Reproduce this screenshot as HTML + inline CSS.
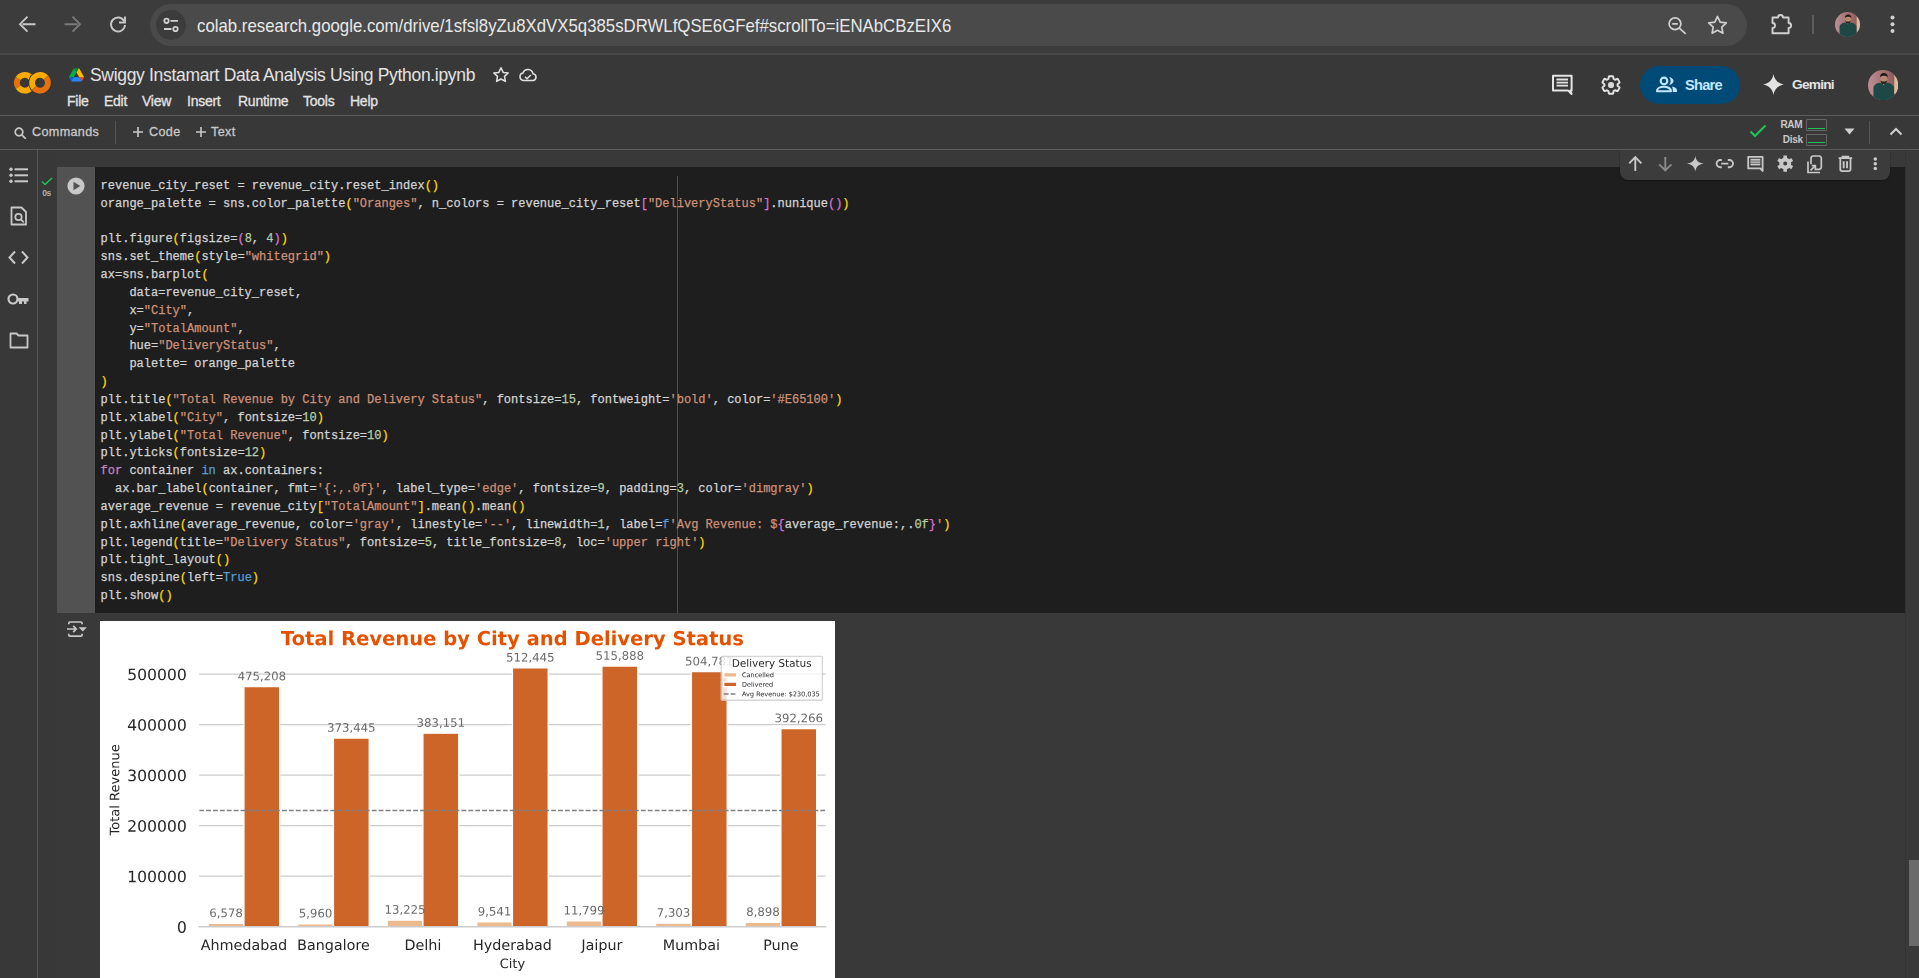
<!DOCTYPE html>
<html><head><meta charset="utf-8">
<style>
html,body{margin:0;padding:0;}
body{width:1919px;height:978px;overflow:hidden;position:relative;background:#383838;font-family:"Liberation Sans",sans-serif;color:#e3e3e3;}
.a{position:absolute;}
svg{display:block;}
/* chrome bar */
#chrome{left:0;top:0;width:1919px;height:53px;background:#3c3c3c;}
#omni{left:150px;top:4px;width:1597px;height:42px;border-radius:21px;background:#4a4a4a;}
#url{left:197px;top:15.3px;font-size:18.4px;white-space:nowrap;color:#e8e8e8;transform:scaleX(0.913);transform-origin:0 0;}
#sep1{left:0;top:53px;width:1919px;height:2px;background:#474a48;}
/* colab header */
#hdr{left:0;top:55px;width:1919px;height:60px;background:#383838;}
#title{left:90px;top:65.4px;font-size:17.5px;letter-spacing:-0.32px;color:#e3e3e3;white-space:nowrap;}
.menu{top:93.4px;font-size:14px;letter-spacing:-0.25px;-webkit-text-stroke:0.3px #e3e3e3;color:#e3e3e3;white-space:nowrap;}
#line2{left:0;top:115px;width:1919px;height:1px;background:#5c5c5c;}
#tb{left:0;top:116px;width:1919px;height:33px;background:#383838;}
.tbt{font-size:12.6px;letter-spacing:0.35px;-webkit-text-stroke:0.3px #c8c8c8;color:#c8c8c8;white-space:nowrap;top:124.6px;}
#line3{left:0;top:149px;width:1919px;height:1px;background:#5c5c5c;}
/* sidebar */
#side{left:0;top:150px;width:37px;height:828px;background:#383838;}
#sideline{left:37px;top:150px;width:1px;height:828px;background:#555555;}
#cellbg{left:57px;top:150px;width:1848px;height:828px;background:#393939;}
#gutter{left:57px;top:167px;width:38px;height:446px;background:#525252;}
#code{left:95px;top:167px;width:1810px;height:446px;background:#1e1e1e;}
#ruler{left:677px;top:176px;width:1px;height:437px;background:#505050;}
#lines{left:100.6px;top:178px;font-family:"Liberation Mono",monospace;font-size:12px;line-height:17.83px;color:#d4d4d4;white-space:pre;-webkit-text-stroke:0.25px currentColor;}
#lines i{font-style:normal;}
#lines .s{color:#ce9178;} #lines .n{color:#b5cea8;} #lines .k{color:#c586c0;} #lines .b{color:#569cd6;}
#lines .y{color:#ffd700;} #lines .p{color:#da70d6;}
#celltb{left:1620px;top:150px;width:270px;height:30px;background:#3c3c3c;border-radius:0 0 8px 8px;box-shadow:0 1px 2px rgba(0,0,0,0.35);}
#scroll{left:1905px;top:150px;width:14px;height:828px;background:#393939;border-left:1px solid #333;}
#thumb{left:1909px;top:860px;width:10px;height:86px;background:#6b6b6b;}
#chart{left:100px;top:621px;width:735px;height:357px;overflow:hidden;background:#fff;}
.mpl *{stroke-linejoin:round;stroke-linecap:butt}
</style></head><body>
<div id="chrome" class="a"></div>
<div id="omni" class="a"></div>
<!-- nav icons -->
<svg class="a" style="left:18px;top:15px" width="20" height="20" viewBox="0 0 20 20"><path d="M17.5 9.2H4.5M9.5 1.7L2 9.2l7.5 7.5" fill="none" stroke="#c7c7c7" stroke-width="1.9"/></svg>
<svg class="a" style="left:62px;top:15px" width="20" height="20" viewBox="0 0 20 20"><path d="M2.5 9.2h13M10.5 1.7L18 9.2l-7.5 7.5" fill="none" stroke="#7a7a7a" stroke-width="1.9"/></svg>
<svg class="a" style="left:107px;top:14px" width="22" height="22" viewBox="0 0 22 22"><path d="M17.2 7.2A7 7 0 1 0 18 11" fill="none" stroke="#c7c7c7" stroke-width="1.9"/><path d="M18 2.5v6h-6" fill="none" stroke="#c7c7c7" stroke-width="1.9"/></svg>
<div class="a" style="left:156px;top:10px;width:30px;height:30px;border-radius:50%;background:#3c3c3c"></div>
<svg class="a" style="left:161px;top:15px" width="20" height="20" viewBox="0 0 20 20" fill="none" stroke="#d0d0d0" stroke-width="1.8"><circle cx="5.5" cy="5.8" r="2.2"/><path d="M9.5 5.8h7.5M3 14h7.5"/><circle cx="14.5" cy="14" r="2.2"/></svg>
<div id="url" class="a">colab.research.google.com/drive/1sfsl8yZu8XdVX5q385sDRWLfQSE6GFef#scrollTo=iENAbCBzEIX6</div>
<svg class="a" style="left:1665px;top:14px" width="24" height="24" viewBox="0 0 24 24" fill="none" stroke="#d0d0d0" stroke-width="1.7"><circle cx="10" cy="9.8" r="5.9"/><path d="M7.2 9.8h5.6M14.3 14.1l6.4 5.7"/></svg>
<svg class="a" style="left:1707px;top:15px" width="21" height="21" viewBox="0 0 21 21"><path d="M10.5 1.5l2.7 5.6 6.1.8-4.5 4.2 1.1 6.1-5.4-2.9-5.4 2.9 1.1-6.1-4.5-4.2 6.1-.8z" fill="none" stroke="#d0d0d0" stroke-width="1.7" stroke-linejoin="round"/></svg>
<svg class="a" style="left:1769px;top:12px" width="25" height="24" viewBox="0 0 25 24"><path d="M3.500 5.500H9A2.500 2.500 0 0 1 14 5.500h5.600V11A2.500 2.500 0 0 1 19.600 16v5.300H3.500V16A2.500 2.500 0 0 0 3.500 11z" fill="none" stroke="#d0d0d0" stroke-width="1.9" stroke-linejoin="round"/></svg>
<div class="a" style="left:1812px;top:15px;width:2px;height:19px;background:#5c5c5c"></div>
<svg class="a" style="left:1835px;top:11.9px" width="25" height="25" viewBox="0 0 30.3 30.3"><defs><clipPath id="av1"><circle cx="15.15" cy="15.15" r="15.15"/></clipPath><linearGradient id="av1g" x1="0" y1="0" x2="1" y2="0"><stop offset="0" stop-color="#bc8e96"/><stop offset="0.55" stop-color="#a36e6e"/><stop offset="1" stop-color="#8a5654"/></linearGradient></defs><g clip-path="url(#av1)"><rect width="30.3" height="30.3" fill="url(#av1g)"/><rect x="26.3" y="5" width="5" height="19" fill="#d6bc9c"/><path d="M5.5 30.3V18c0-3 3-4.800 6.500-5.300l3.600 1.600 3.600-1.600c3.500.5 6.800 2.300 6.800 5.300v12.300z" fill="#1d4846"/><path d="M13.600 12.500l2 3 2-3z" fill="#a07a62"/><ellipse cx="15.8" cy="9.3" rx="3.600" ry="4.300" fill="#b58a70"/><path d="M12.4 10.200c.3 2.600 1.800 3.900 3.400 3.900s3.100-1.300 3.400-3.900c-.8 1-2 1.400-3.400 1.400s-2.600-.4-3.400-1.400z" fill="#2a2420"/><path d="M12 7.600c-.2-3 1.600-4.600 3.900-4.600s4.100 1.600 3.900 4.600c-.6-1.200-2-1.800-3.900-1.800s-3.300.6-3.900 1.800z" fill="#1c1816"/></g></svg>
<svg class="a" style="left:1888px;top:14px" width="9" height="22" viewBox="0 0 9 22" fill="#d0d0d0"><circle cx="4.5" cy="3.5" r="2"/><circle cx="4.5" cy="10.2" r="2"/><circle cx="4.5" cy="17.1" r="2"/></svg>
<div id="sep1" class="a"></div>
<div id="hdr" class="a"></div>
<!-- colab logo -->
<svg class="a" style="left:10px;top:64px" width="45" height="36" viewBox="10 64 45 36"><g fill="none" stroke-width="5.8"><path d="M31.03 77.89 A7.90 7.90 0 0 0 18.10 78.56" stroke="#f9ab00"/><path d="M18.10 78.56 A7.90 7.90 0 0 0 18.25 87.17" stroke="#e8710a"/><path d="M18.25 87.17 A7.90 7.90 0 0 0 31.03 87.61" stroke="#f9ab00"/><path d="M37.30 75.33 A7.90 7.90 0 0 0 37.30 90.17" stroke="#383838" stroke-width="7.4"/><path d="M45.87 77.46 A7.90 7.90 0 0 0 34.13 88.04" stroke="#f9ab00"/><path d="M34.13 88.04 A7.90 7.90 0 0 0 45.87 77.46" stroke="#e8710a"/></g></svg>
<!-- drive icon -->
<svg class="a" style="left:68.5px;top:68px" width="15" height="13.6" viewBox="0 0 87.3 78"><path d="m6.6 66.85 3.85 6.65c.8 1.4 1.950 2.5 3.3 3.3l13.75-23.8h-27.5c0 1.55.4 3.1 1.2 4.5z" fill="#0066da"/><path d="m43.65 25-13.75-23.8c-1.35.8-2.5 1.9-3.3 3.3l-25.4 44a9.06 9.06 0 0 0 -1.2 4.5h27.5z" fill="#00ac47"/><path d="m73.55 76.8c1.35-.8 2.5-1.9 3.3-3.3l1.6-2.75 7.65-13.25c.8-1.4 1.2-2.95 1.2-4.5h-27.502l5.852 11.5z" fill="#ea4335"/><path d="m43.65 25 13.75-23.8c-1.35-.8-2.9-1.2-4.5-1.2h-18.5c-1.6 0-3.15.45-4.5 1.2z" fill="#00832d"/><path d="m59.8 53h-32.3l-13.75 23.8c1.35.8 2.9 1.2 4.5 1.2h50.8c1.6 0 3.15-.45 4.5-1.2z" fill="#2684fc"/><path d="m73.4 26.5-12.7-22c-.8-1.4-1.95-2.5-3.3-3.3l-13.75 23.8 16.15 28h27.45c0-1.55-.4-3.1-1.2-4.5z" fill="#ffba00"/></svg>
<div id="title" class="a">Swiggy Instamart Data Analysis Using Python.ipynb</div>
<svg class="a" style="left:492px;top:66px" width="18" height="18" viewBox="0 0 18 18"><path d="M9 1.8l2.2 4.6 5 .6-3.7 3.4.9 5-4.4-2.4-4.4 2.4.9-5L1.8 7l5-.6z" fill="none" stroke="#e3e3e3" stroke-width="1.5" stroke-linejoin="round"/></svg>
<svg class="a" style="left:518px;top:66px" width="20" height="18" viewBox="0 0 20 18"><path d="M5.5 14.5a3.8 3.8 0 0 1-.5-7.5 5.2 5.2 0 0 1 10 .8 3.4 3.4 0 0 1 .3 6.7z" fill="none" stroke="#e3e3e3" stroke-width="1.5"/><path d="M7 10.8l2 2 3.8-3.8" fill="none" stroke="#e3e3e3" stroke-width="1.4"/></svg>
<div class="a menu" style="left:67px">File</div>
<div class="a menu" style="left:104px">Edit</div>
<div class="a menu" style="left:142px">View</div>
<div class="a menu" style="left:187px">Insert</div>
<div class="a menu" style="left:238px">Runtime</div>
<div class="a menu" style="left:303px">Tools</div>
<div class="a menu" style="left:350px">Help</div>
<!-- right header -->
<svg class="a" style="left:1551px;top:74px" width="23" height="21" viewBox="0 0 23 21"><path d="M2 1.8h18.6v14.6h-1.2l1.2 3.6-3.6-3.6H2z" fill="none" stroke="#e3e3e3" stroke-width="2" stroke-linejoin="round"/><path d="M5.5 5.5h11.5M5.5 8.6h11.5M5.5 11.6h11.5" stroke="#e3e3e3" stroke-width="1.9"/></svg>
<svg class="a" style="left:1599.5px;top:73.8px" width="22" height="22" viewBox="0 0 24 24"><path d="M19.14 12.94c.04-.3.06-.61.06-.94 0-.32-.02-.64-.07-.94l2.03-1.58a.49.49 0 0 0 .12-.61l-1.920-3.32a.49.49 0 0 0-.59-.22l-2.39.96c-.5-.38-1.03-.7-1.62-.94l-.36-2.54a.48.48 0 0 0-.48-.41h-3.84c-.24 0-.43.17-.47.41l-.36 2.540c-.59.24-1.13.57-1.62.94l-2.39-.96a.48.48 0 0 0-.59.22L2.74 8.87c-.12.21-.08.47.12.61l2.03 1.58c-.05.3-.09.63-.09.94s.02.64.07.94l-2.03 1.58a.49.49 0 0 0-.12.61l1.92 3.32c.12.22.37.29.59.22l2.39-.96c.5.38 1.03.7 1.62.94l.36 2.54c.05.24.24.41.48.41h3.84c.24 0 .44-.17.47-.41l.36-2.54c.59-.24 1.13-.56 1.62-.94l2.39.96c.22.08.47 0 .59-.22l1.92-3.32c.12-.22.07-.47-.12-.61l-2.01-1.58z" fill="none" stroke="#e3e3e3" stroke-width="2.1" stroke-linejoin="round"/><circle cx="12" cy="12" r="3.4" fill="#d8d8d8"/></svg>
<div class="a" style="left:1640px;top:66px;width:100px;height:38px;border-radius:19px;background:#004a77"></div>
<svg class="a" style="left:1655px;top:76px" width="24" height="18" viewBox="0 0 24 18"><circle cx="9" cy="4.9" r="3.3" fill="none" stroke="#c2e7ff" stroke-width="2.1"/><path d="M2 15.1c0-2.6 3.3-4.3 7-4.3s7 1.7 7 4.3v.1H2z" fill="none" stroke="#c2e7ff" stroke-width="2.1" stroke-linejoin="round"/><path d="M14 1c2.6.3 4.6 2.3 4.6 3.9S16.6 8.6 14 8.9c1-1.1 1.6-2.500 1.6-4S15 2.1 14 1z" fill="#c2e7ff"/><path d="M17 10.5c3 .6 5 2 5 4v1.6h-4.200v-1.600c0-1.600-.3-2.900-.8-4z" fill="#c2e7ff"/></svg>
<div class="a" style="left:1685px;top:76.5px;font-size:14.6px;font-weight:bold;letter-spacing:-0.75px;color:#c2e7ff">Share</div>
<svg class="a" style="left:1763px;top:74px" width="21" height="21" viewBox="0 0 21 21"><path d="M10.5 0C11.2 5.5 15 9.6 21 10.5 15 11.4 11.2 15.5 10.5 21 9.8 15.5 6 11.4 0 10.5 6 9.6 9.8 5.5 10.5 0z" fill="#e3e3e3"/></svg>
<div class="a" style="left:1792px;top:77.3px;font-size:13.7px;font-weight:bold;letter-spacing:-0.75px;color:#e3e3e3">Gemini</div>
<svg class="a" style="left:1867.9px;top:69.7px" width="30.3" height="30.3" viewBox="0 0 30.3 30.3"><defs><clipPath id="av2"><circle cx="15.15" cy="15.15" r="15.15"/></clipPath><linearGradient id="av2g" x1="0" y1="0" x2="1" y2="0"><stop offset="0" stop-color="#bc8e96"/><stop offset="0.55" stop-color="#a36e6e"/><stop offset="1" stop-color="#8a5654"/></linearGradient></defs><g clip-path="url(#av2)"><rect width="30.3" height="30.3" fill="url(#av2g)"/><rect x="26.3" y="5" width="5" height="19" fill="#d6bc9c"/><path d="M5.5 30.3V18c0-3 3-4.800 6.500-5.300l3.600 1.600 3.600-1.600c3.500.5 6.800 2.300 6.800 5.300v12.300z" fill="#1d4846"/><path d="M13.600 12.500l2 3 2-3z" fill="#a07a62"/><ellipse cx="15.8" cy="9.3" rx="3.600" ry="4.300" fill="#b58a70"/><path d="M12.4 10.200c.3 2.600 1.800 3.900 3.400 3.900s3.100-1.300 3.400-3.900c-.8 1-2 1.400-3.400 1.400s-2.600-.4-3.400-1.400z" fill="#2a2420"/><path d="M12 7.600c-.2-3 1.600-4.600 3.900-4.600s4.100 1.600 3.900 4.600c-.6-1.200-2-1.800-3.900-1.800s-3.300.6-3.900 1.800z" fill="#1c1816"/></g></svg>
<div id="line2" class="a"></div>
<div id="tb" class="a"></div>
<svg class="a" style="left:14px;top:127px" width="14" height="12" viewBox="0 0 14 12"><circle cx="5" cy="5" r="3.8" fill="none" stroke="#c8c8c8" stroke-width="1.7"/><path d="M7.8 7.8l4 4" stroke="#c8c8c8" stroke-width="1.8"/></svg>
<div class="a tbt" style="left:32px">Commands</div>
<div class="a" style="left:115px;top:121px;width:1px;height:23px;background:#555"></div>
<svg class="a" style="left:132px;top:126px" width="12" height="12" viewBox="0 0 12 12"><path d="M6 1v10M1 6h10" stroke="#c8c8c8" stroke-width="1.6"/></svg>
<div class="a tbt" style="left:149px">Code</div>
<svg class="a" style="left:195px;top:126px" width="12" height="12" viewBox="0 0 12 12"><path d="M6 1v10M1 6h10" stroke="#c8c8c8" stroke-width="1.6"/></svg>
<div class="a tbt" style="left:211px">Text</div>
<svg class="a" style="left:1749px;top:124px" width="18" height="14" viewBox="0 0 18 14"><path d="M1.5 7.5l4.5 4.5 10.5-10.5" fill="none" stroke="#1ec15a" stroke-width="2.2"/></svg>
<div class="a" style="left:1780.5px;top:119.3px;font-size:10px;font-weight:bold;letter-spacing:-0.4px;color:#c8c8c8">RAM</div>
<div class="a" style="left:1782.8px;top:134.3px;font-size:10px;font-weight:bold;letter-spacing:-0.3px;color:#c8c8c8">Disk</div>
<div class="a" style="left:1806px;top:119px;width:19px;height:10px;border:1px solid #666;border-radius:1px"><div style="position:absolute;left:1px;right:1px;bottom:1px;height:1px;background:#1ec15a"></div></div>
<div class="a" style="left:1806px;top:134px;width:19px;height:10px;border:1px solid #666;border-radius:1px"><div style="position:absolute;left:1px;right:1px;bottom:2px;height:1px;background:#1ec15a"></div></div>
<svg class="a" style="left:1844px;top:128px" width="11" height="7" viewBox="0 0 11 7"><path d="M0.5 0.5h10l-5 6z" fill="#d0d0d0"/></svg>
<div class="a" style="left:1869px;top:121px;width:1px;height:23px;background:#555"></div>
<svg class="a" style="left:1889px;top:126px" width="14" height="10" viewBox="0 0 14 10"><path d="M1.5 8.5l5.5-5.5 5.5 5.5" fill="none" stroke="#d0d0d0" stroke-width="2"/></svg>
<div id="line3" class="a"></div>
<div id="side" class="a"></div>
<div id="sideline" class="a"></div>
<!-- sidebar icons -->
<svg class="a" style="left:9px;top:167px" width="20" height="17" viewBox="0 0 20 17" fill="#c8c8c8"><circle cx="2" cy="2.3" r="1.7"/><circle cx="2" cy="8.3" r="1.7"/><circle cx="2" cy="14.3" r="1.7"/><rect x="5.5" y="1.3" width="13.5" height="2"/><rect x="5.5" y="7.3" width="13.5" height="2"/><rect x="5.5" y="13.3" width="13.5" height="2"/></svg>
<svg class="a" style="left:10px;top:206px" width="18" height="20" viewBox="0 0 18 20"><path d="M1.5 1.5h10l4.5 4.5v12.5H1.5z" fill="none" stroke="#c8c8c8" stroke-width="1.8" stroke-linejoin="round"/><circle cx="8.5" cy="11" r="3.2" fill="none" stroke="#c8c8c8" stroke-width="1.7"/><path d="M10.8 13.3l3 3" stroke="#c8c8c8" stroke-width="1.8"/></svg>
<svg class="a" style="left:8px;top:250px" width="21" height="15" viewBox="0 0 21 15"><path d="M7 1.5L1.5 7.5 7 13.5M14 1.5l5.5 6-5.5 6" fill="none" stroke="#c8c8c8" stroke-width="2"/></svg>
<svg class="a" style="left:7px;top:292px" width="23" height="14" viewBox="0 0 23 14"><circle cx="6" cy="7" r="4.5" fill="none" stroke="#c8c8c8" stroke-width="2.2"/><path d="M10.5 6h11v3.5h-2V12h-2.5V9.5h-2V12H12V9.5h-1.5" fill="#c8c8c8"/></svg>
<svg class="a" style="left:9px;top:332px" width="20" height="17" viewBox="0 0 20 17"><path d="M1.5 1.5h6l2 2h9v12h-17z" fill="none" stroke="#c8c8c8" stroke-width="1.8" stroke-linejoin="round"/></svg>
<div id="cellbg" class="a"></div>
<div class="a" style="left:38px;top:150px;width:19px;height:828px;background:#383838"></div>
<div id="gutter" class="a"></div>
<div id="code" class="a"></div>
<div id="ruler" class="a"></div>
<!-- run indicator -->
<svg class="a" style="left:41px;top:177px" width="12" height="9" viewBox="0 0 12 9"><path d="M1 4.5l3 3 7-6.5" fill="none" stroke="#1ec15a" stroke-width="1.5"/></svg>
<div class="a" style="left:42.2px;top:187.6px;font-size:8.5px;font-weight:bold;color:#b0b0b0;letter-spacing:-0.4px">0s</div>
<svg class="a" style="left:67px;top:177px" width="18" height="18" viewBox="0 0 18 18"><circle cx="9" cy="9" r="8.6" fill="#c8c8c8"/><path d="M6.5 4.8v8.4l6.8-4.2z" fill="#525252"/></svg>
<div id="lines" class="a"><div>revenue_city_reset = revenue_city.reset_index<i class="y">()</i></div><div>orange_palette = sns.color_palette<i class="y">(</i><i class="s">"Oranges"</i>, n_colors = revenue_city_reset<i class="p">[</i><i class="s">"DeliveryStatus"</i><i class="p">]</i>.nunique<i class="p">()</i><i class="y">)</i></div><div>&nbsp;</div><div>plt.figure<i class="y">(</i>figsize=<i class="p">(</i><i class="n">8</i>, <i class="n">4</i><i class="p">)</i><i class="y">)</i></div><div>sns.set_theme<i class="y">(</i>style=<i class="s">"whitegrid"</i><i class="y">)</i></div><div>ax=sns.barplot<i class="y">(</i></div><div>    data=revenue_city_reset,</div><div>    x=<i class="s">"City"</i>,</div><div>    y=<i class="s">"TotalAmount"</i>,</div><div>    hue=<i class="s">"DeliveryStatus"</i>,</div><div>    palette= orange_palette</div><div><i class="y">)</i></div><div>plt.title<i class="y">(</i><i class="s">"Total Revenue by City and Delivery Status"</i>, fontsize=<i class="n">15</i>, fontweight=<i class="s">'bold'</i>, color=<i class="s">'#E65100'</i><i class="y">)</i></div><div>plt.xlabel<i class="y">(</i><i class="s">"City"</i>, fontsize=<i class="n">10</i><i class="y">)</i></div><div>plt.ylabel<i class="y">(</i><i class="s">"Total Revenue"</i>, fontsize=<i class="n">10</i><i class="y">)</i></div><div>plt.yticks<i class="y">(</i>fontsize=<i class="n">12</i><i class="y">)</i></div><div><i class="k">for</i> container <i class="b">in</i> ax.containers:</div><div>  ax.bar_label<i class="y">(</i>container, fmt=<i class="s">'{:,.0f}'</i>, label_type=<i class="s">'edge'</i>, fontsize=<i class="n">9</i>, padding=<i class="n">3</i>, color=<i class="s">'dimgray'</i><i class="y">)</i></div><div>average_revenue = revenue_city<i class="y">[</i><i class="s">"TotalAmount"</i><i class="y">]</i>.mean<i class="y">()</i>.mean<i class="y">()</i></div><div>plt.axhline<i class="y">(</i>average_revenue, color=<i class="s">'gray'</i>, linestyle=<i class="s">'--'</i>, linewidth=<i class="n">1</i>, label=<i class="b">f</i><i class="s">'Avg Revenue: $</i><i class="p">{</i>average_revenue:,.<i class="n">0f</i><i class="p">}</i><i class="s">'</i><i class="y">)</i></div><div>plt.legend<i class="y">(</i>title=<i class="s">"Delivery Status"</i>, fontsize=<i class="n">5</i>, title_fontsize=<i class="n">8</i>, loc=<i class="s">'upper right'</i><i class="y">)</i></div><div>plt.tight_layout<i class="y">()</i></div><div>sns.despine<i class="y">(</i>left=<i class="b">True</i><i class="y">)</i></div><div>plt.show<i class="y">()</i></div></div>
<div id="celltb" class="a"></div>
<svg class="a" style="left:1620px;top:150px" width="270" height="30" viewBox="0 0 270 30" fill="none" stroke-width="1.9">
 <path d="M15.3 21V7.5M9.2 13.3l6.1-6.1 6.1 6.1" stroke="#c8c8c8" stroke-width="1.9"/>
 <path d="M45.3 7v13.4M39.2 14.3l6.1 6.1 6.1-6.1" stroke="#8a8a8a" stroke-width="1.9"/>
 <path d="M75.3 5.8C75.9 10.6 78.5 13.1 83.7 13.7 78.5 14.3 75.9 16.8 75.3 21.6 74.7 16.8 72.1 14.3 66.9 13.7 72.1 13.1 74.7 10.6 75.3 5.8z" fill="#c8c8c8" stroke="none"/>
 <path d="M101.8 10h-1.6a3.6 3.6 0 0 0 0 7.2h1.6M107.8 10h1.6a3.6 3.6 0 0 1 0 7.2h-1.6M101.2 13.6h7.2" stroke="#c8c8c8" stroke-width="1.9"/>
 <path d="M128.2 6.8h14.4v14.2l-2.3-2.6h-12.1z" stroke="#c8c8c8" stroke-width="1.8" stroke-linejoin="round"/>
 <rect x="130.5" y="8.8" width="9.8" height="6.6" fill="#c8c8c8" stroke="none"/>
 <path d="M130.5 11h9.8M130.5 13.2h9.8" stroke="#3a3a3a" stroke-width="0.7"/>
 <path fill-rule="evenodd" d="M163.41 7.87 L163.39 5.50 L167.01 5.50 L166.99 7.87 L169.26 9.18 L171.31 7.98 L173.12 11.12 L171.06 12.29 L171.06 14.91 L173.12 16.08 L171.31 19.22 L169.26 18.02 L166.99 19.33 L167.01 21.70 L163.39 21.70 L163.41 19.33 L161.14 18.02 L159.09 19.22 L157.28 16.08 L159.34 14.91 L159.34 12.29 L157.28 11.12 L159.09 7.98 L161.14 9.18z M163.20 13.60 a2.00 2.00 0 1 0 4.00 0 a2.00 2.00 0 1 0 -4.00 0z" fill="#c8c8c8" stroke="none"/>
 <path d="M194.5 19.3h4.6a2.200 2.200 0 0 0 2.2-2.200V8.2A2.200 2.200 0 0 0 199.100 6h-5.900a2.200 2.200 0 0 0-2.200 2.200v6" stroke="#c8c8c8" stroke-width="1.7"/>
 <path d="M188 11.5v11h12" stroke="#c8c8c8" stroke-width="1.7"/>
 <path d="M190.6 20.4l4.600-4.600M191.8 15.6h3.600v3.600" stroke="#c8c8c8" stroke-width="1.6"/>
 <path d="M218.6 8.2h13.6M222.5 8.2V6.6h5.8v1.6" stroke="#c8c8c8" stroke-width="1.8"/>
 <path d="M220.300 8.800v10.500a1.800 1.800 0 0 0 1.800 1.800h6.600a1.800 1.800 0 0 0 1.800-1.800V8.800" stroke="#c8c8c8" stroke-width="1.8"/>
 <path d="M223.700 11.200v7M227 11.200v7" stroke="#c8c8c8" stroke-width="1.9"/>
 <circle cx="255.3" cy="9" r="1.8" fill="#c8c8c8" stroke="none"/><circle cx="255.3" cy="13.7" r="1.8" fill="#c8c8c8" stroke="none"/><circle cx="255.3" cy="18.5" r="1.8" fill="#c8c8c8" stroke="none"/>
</svg>
<div id="scroll" class="a"></div>
<div id="thumb" class="a"></div>
<svg class="a" style="left:66px;top:620px" width="22" height="18" viewBox="0 0 22 18"><path d="M2.800 4.300V3.200c0-.7.5-1.200 1.200-1.200h10.900c.7 0 1.200.5 1.200 1.200v1.100M2.800 13.800v1.100c0 .7.5 1.200 1.200 1.200h10.900c.7 0 1.200-.5 1.200-1.200v-1.100" fill="none" stroke="#c8c8c8" stroke-width="1.700"/><path d="M1 9h9.200M7.200 5.900l3 3.100-3 3.100" fill="none" stroke="#c8c8c8" stroke-width="1.700"/><path d="M12.700 7.200h8.200l-4.100 4.300z" fill="#c8c8c8"/></svg>
<div id="chart" class="a"><svg class="mpl" width="735" height="359.2" viewBox="0 0 564.43 275.80" version="1.1"> <defs>  </defs> <g id="figure_1"> <g id="patch_1"> <path d="M 0 275.80 L 564.43 275.80 L 564.43 0 L 0 0 z " style="fill: #ffffff"/> </g> <g id="axes_1"> <g id="patch_2"> <path d="M 76.18 234.77 L 557.23 234.77 L 557.23 24.59 L 76.18 24.59 z " style="fill: #ffffff"/> </g> <g id="matplotlib.axis_1"> <g id="xtick_1"> <g id="text_1"> <g style="fill: #262626" transform="translate(77.34 252.63) scale(0.11 -0.11)"> <defs> <path id="DejaVuSans-41" d="M 2188 4044 L 1331 1722 L 3047 1722 L 2188 4044 z M 1831 4666 L 2547 4666 L 4325 0 L 3669 0 L 3244 1197 L 1141 1197 L 716 0 L 50 0 L 1831 4666 z " transform="scale(0.015625)"/> <path id="DejaVuSans-68" d="M 3513 2113 L 3513 0 L 2938 0 L 2938 2094 Q 2938 2591 2744 2837 Q 2550 3084 2163 3084 Q 1697 3084 1428 2787 Q 1159 2491 1159 1978 L 1159 0 L 581 0 L 581 4863 L 1159 4863 L 1159 2956 Q 1366 3272 1645 3428 Q 1925 3584 2291 3584 Q 2894 3584 3203 3211 Q 3513 2838 3513 2113 z " transform="scale(0.015625)"/> <path id="DejaVuSans-6d" d="M 3328 2828 Q 3544 3216 3844 3400 Q 4144 3584 4550 3584 Q 5097 3584 5394 3201 Q 5691 2819 5691 2113 L 5691 0 L 5113 0 L 5113 2094 Q 5113 2597 4934 2840 Q 4756 3084 4391 3084 Q 3944 3084 3684 2787 Q 3425 2491 3425 1978 L 3425 0 L 2847 0 L 2847 2094 Q 2847 2600 2669 2842 Q 2491 3084 2119 3084 Q 1678 3084 1418 2786 Q 1159 2488 1159 1978 L 1159 0 L 581 0 L 581 3500 L 1159 3500 L 1159 2956 Q 1356 3278 1631 3431 Q 1906 3584 2284 3584 Q 2666 3584 2933 3390 Q 3200 3197 3328 2828 z " transform="scale(0.015625)"/> <path id="DejaVuSans-65" d="M 3597 1894 L 3597 1613 L 953 1613 Q 991 1019 1311 708 Q 1631 397 2203 397 Q 2534 397 2845 478 Q 3156 559 3463 722 L 3463 178 Q 3153 47 2828 -22 Q 2503 -91 2169 -91 Q 1331 -91 842 396 Q 353 884 353 1716 Q 353 2575 817 3079 Q 1281 3584 2069 3584 Q 2775 3584 3186 3129 Q 3597 2675 3597 1894 z M 3022 2063 Q 3016 2534 2758 2815 Q 2500 3097 2075 3097 Q 1594 3097 1305 2825 Q 1016 2553 972 2059 L 3022 2063 z " transform="scale(0.015625)"/> <path id="DejaVuSans-64" d="M 2906 2969 L 2906 4863 L 3481 4863 L 3481 0 L 2906 0 L 2906 525 Q 2725 213 2448 61 Q 2172 -91 1784 -91 Q 1150 -91 751 415 Q 353 922 353 1747 Q 353 2572 751 3078 Q 1150 3584 1784 3584 Q 2172 3584 2448 3432 Q 2725 3281 2906 2969 z M 947 1747 Q 947 1113 1208 752 Q 1469 391 1925 391 Q 2381 391 2643 752 Q 2906 1113 2906 1747 Q 2906 2381 2643 2742 Q 2381 3103 1925 3103 Q 1469 3103 1208 2742 Q 947 2381 947 1747 z " transform="scale(0.015625)"/> <path id="DejaVuSans-61" d="M 2194 1759 Q 1497 1759 1228 1600 Q 959 1441 959 1056 Q 959 750 1161 570 Q 1363 391 1709 391 Q 2188 391 2477 730 Q 2766 1069 2766 1631 L 2766 1759 L 2194 1759 z M 3341 1997 L 3341 0 L 2766 0 L 2766 531 Q 2569 213 2275 61 Q 1981 -91 1556 -91 Q 1019 -91 701 211 Q 384 513 384 1019 Q 384 1609 779 1909 Q 1175 2209 1959 2209 L 2766 2209 L 2766 2266 Q 2766 2663 2505 2880 Q 2244 3097 1772 3097 Q 1472 3097 1187 3025 Q 903 2953 641 2809 L 641 3341 Q 956 3463 1253 3523 Q 1550 3584 1831 3584 Q 2591 3584 2966 3190 Q 3341 2797 3341 1997 z " transform="scale(0.015625)"/> <path id="DejaVuSans-62" d="M 3116 1747 Q 3116 2381 2855 2742 Q 2594 3103 2138 3103 Q 1681 3103 1420 2742 Q 1159 2381 1159 1747 Q 1159 1113 1420 752 Q 1681 391 2138 391 Q 2594 391 2855 752 Q 3116 1113 3116 1747 z M 1159 2969 Q 1341 3281 1617 3432 Q 1894 3584 2278 3584 Q 2916 3584 3314 3078 Q 3713 2572 3713 1747 Q 3713 922 3314 415 Q 2916 -91 2278 -91 Q 1894 -91 1617 61 Q 1341 213 1159 525 L 1159 0 L 581 0 L 581 4863 L 1159 4863 L 1159 2969 z " transform="scale(0.015625)"/> </defs> <use href="#DejaVuSans-41"/> <use href="#DejaVuSans-68" transform="translate(68.40 0)"/> <use href="#DejaVuSans-6d" transform="translate(131.78 0)"/> <use href="#DejaVuSans-65" transform="translate(229.19 0)"/> <use href="#DejaVuSans-64" transform="translate(290.72 0)"/> <use href="#DejaVuSans-61" transform="translate(354.19 0)"/> <use href="#DejaVuSans-62" transform="translate(415.47 0)"/> <use href="#DejaVuSans-61" transform="translate(478.95 0)"/> <use href="#DejaVuSans-64" transform="translate(540.23 0)"/> </g> </g> </g> <g id="xtick_2"> <g id="text_2"> <g style="fill: #262626" transform="translate(151.36 252.63) scale(0.11 -0.11)"> <defs> <path id="DejaVuSans-42" d="M 1259 2228 L 1259 519 L 2272 519 Q 2781 519 3026 730 Q 3272 941 3272 1375 Q 3272 1813 3026 2020 Q 2781 2228 2272 2228 L 1259 2228 z M 1259 4147 L 1259 2741 L 2194 2741 Q 2656 2741 2882 2914 Q 3109 3088 3109 3444 Q 3109 3797 2882 3972 Q 2656 4147 2194 4147 L 1259 4147 z M 628 4666 L 2241 4666 Q 2963 4666 3353 4366 Q 3744 4066 3744 3513 Q 3744 3084 3544 2831 Q 3344 2578 2956 2516 Q 3422 2416 3680 2098 Q 3938 1781 3938 1306 Q 3938 681 3513 340 Q 3088 0 2303 0 L 628 0 L 628 4666 z " transform="scale(0.015625)"/> <path id="DejaVuSans-6e" d="M 3513 2113 L 3513 0 L 2938 0 L 2938 2094 Q 2938 2591 2744 2837 Q 2550 3084 2163 3084 Q 1697 3084 1428 2787 Q 1159 2491 1159 1978 L 1159 0 L 581 0 L 581 3500 L 1159 3500 L 1159 2956 Q 1366 3272 1645 3428 Q 1925 3584 2291 3584 Q 2894 3584 3203 3211 Q 3513 2838 3513 2113 z " transform="scale(0.015625)"/> <path id="DejaVuSans-67" d="M 2906 1791 Q 2906 2416 2648 2759 Q 2391 3103 1925 3103 Q 1463 3103 1205 2759 Q 947 2416 947 1791 Q 947 1169 1205 825 Q 1463 481 1925 481 Q 2391 481 2648 825 Q 2906 1169 2906 1791 z M 3481 434 Q 3481 -459 3084 -895 Q 2688 -1331 1869 -1331 Q 1566 -1331 1297 -1286 Q 1028 -1241 775 -1147 L 775 -588 Q 1028 -725 1275 -790 Q 1522 -856 1778 -856 Q 2344 -856 2625 -561 Q 2906 -266 2906 331 L 2906 616 Q 2728 306 2450 153 Q 2172 0 1784 0 Q 1141 0 747 490 Q 353 981 353 1791 Q 353 2603 747 3093 Q 1141 3584 1784 3584 Q 2172 3584 2450 3431 Q 2728 3278 2906 2969 L 2906 3500 L 3481 3500 L 3481 434 z " transform="scale(0.015625)"/> <path id="DejaVuSans-6c" d="M 603 4863 L 1178 4863 L 1178 0 L 603 0 L 603 4863 z " transform="scale(0.015625)"/> <path id="DejaVuSans-6f" d="M 1959 3097 Q 1497 3097 1228 2736 Q 959 2375 959 1747 Q 959 1119 1226 758 Q 1494 397 1959 397 Q 2419 397 2687 759 Q 2956 1122 2956 1747 Q 2956 2369 2687 2733 Q 2419 3097 1959 3097 z M 1959 3584 Q 2709 3584 3137 3096 Q 3566 2609 3566 1747 Q 3566 888 3137 398 Q 2709 -91 1959 -91 Q 1206 -91 779 398 Q 353 888 353 1747 Q 353 2609 779 3096 Q 1206 3584 1959 3584 z " transform="scale(0.015625)"/> <path id="DejaVuSans-72" d="M 2631 2963 Q 2534 3019 2420 3045 Q 2306 3072 2169 3072 Q 1681 3072 1420 2755 Q 1159 2438 1159 1844 L 1159 0 L 581 0 L 581 3500 L 1159 3500 L 1159 2956 Q 1341 3275 1631 3429 Q 1922 3584 2338 3584 Q 2397 3584 2469 3576 Q 2541 3569 2628 3553 L 2631 2963 z " transform="scale(0.015625)"/> </defs> <use href="#DejaVuSans-42"/> <use href="#DejaVuSans-61" transform="translate(68.60 0)"/> <use href="#DejaVuSans-6e" transform="translate(129.88 0)"/> <use href="#DejaVuSans-67" transform="translate(193.26 0)"/> <use href="#DejaVuSans-61" transform="translate(256.73 0)"/> <use href="#DejaVuSans-6c" transform="translate(318.01 0)"/> <use href="#DejaVuSans-6f" transform="translate(345.80 0)"/> <use href="#DejaVuSans-72" transform="translate(406.98 0)"/> <use href="#DejaVuSans-65" transform="translate(445.84 0)"/> </g> </g> </g> <g id="xtick_3"> <g id="text_3"> <g style="fill: #262626" transform="translate(233.83 252.63) scale(0.11 -0.11)"> <defs> <path id="DejaVuSans-44" d="M 1259 4147 L 1259 519 L 2022 519 Q 2988 519 3436 956 Q 3884 1394 3884 2338 Q 3884 3275 3436 3711 Q 2988 4147 2022 4147 L 1259 4147 z M 628 4666 L 1925 4666 Q 3281 4666 3915 4102 Q 4550 3538 4550 2338 Q 4550 1131 3912 565 Q 3275 0 1925 0 L 628 0 L 628 4666 z " transform="scale(0.015625)"/> <path id="DejaVuSans-69" d="M 603 3500 L 1178 3500 L 1178 0 L 603 0 L 603 3500 z M 603 4863 L 1178 4863 L 1178 4134 L 603 4134 L 603 4863 z " transform="scale(0.015625)"/> </defs> <use href="#DejaVuSans-44"/> <use href="#DejaVuSans-65" transform="translate(77.00 0)"/> <use href="#DejaVuSans-6c" transform="translate(138.52 0)"/> <use href="#DejaVuSans-68" transform="translate(166.30 0)"/> <use href="#DejaVuSans-69" transform="translate(229.68 0)"/> </g> </g> </g> <g id="xtick_4"> <g id="text_4"> <g style="fill: #262626" transform="translate(286.46 252.63) scale(0.11 -0.11)"> <defs> <path id="DejaVuSans-48" d="M 628 4666 L 1259 4666 L 1259 2753 L 3553 2753 L 3553 4666 L 4184 4666 L 4184 0 L 3553 0 L 3553 2222 L 1259 2222 L 1259 0 L 628 0 L 628 4666 z " transform="scale(0.015625)"/> <path id="DejaVuSans-79" d="M 2059 -325 Q 1816 -950 1584 -1140 Q 1353 -1331 966 -1331 L 506 -1331 L 506 -850 L 844 -850 Q 1081 -850 1212 -737 Q 1344 -625 1503 -206 L 1606 56 L 191 3500 L 800 3500 L 1894 763 L 2988 3500 L 3597 3500 L 2059 -325 z " transform="scale(0.015625)"/> </defs> <use href="#DejaVuSans-48"/> <use href="#DejaVuSans-79" transform="translate(75.19 0)"/> <use href="#DejaVuSans-64" transform="translate(134.37 0)"/> <use href="#DejaVuSans-65" transform="translate(197.85 0)"/> <use href="#DejaVuSans-72" transform="translate(259.37 0)"/> <use href="#DejaVuSans-61" transform="translate(300.48 0)"/> <use href="#DejaVuSans-62" transform="translate(361.76 0)"/> <use href="#DejaVuSans-61" transform="translate(425.24 0)"/> <use href="#DejaVuSans-64" transform="translate(486.52 0)"/> </g> </g> </g> <g id="xtick_5"> <g id="text_5"> <g style="fill: #262626" transform="translate(369.67 252.63) scale(0.11 -0.11)"> <defs> <path id="DejaVuSans-4a" d="M 628 4666 L 1259 4666 L 1259 325 Q 1259 -519 939 -900 Q 619 -1281 -91 -1281 L -331 -1281 L -331 -750 L -134 -750 Q 284 -750 456 -515 Q 628 -281 628 325 L 628 4666 z " transform="scale(0.015625)"/> <path id="DejaVuSans-70" d="M 1159 525 L 1159 -1331 L 581 -1331 L 581 3500 L 1159 3500 L 1159 2969 Q 1341 3281 1617 3432 Q 1894 3584 2278 3584 Q 2916 3584 3314 3078 Q 3713 2572 3713 1747 Q 3713 922 3314 415 Q 2916 -91 2278 -91 Q 1894 -91 1617 61 Q 1341 213 1159 525 z M 3116 1747 Q 3116 2381 2855 2742 Q 2594 3103 2138 3103 Q 1681 3103 1420 2742 Q 1159 2381 1159 1747 Q 1159 1113 1420 752 Q 1681 391 2138 391 Q 2594 391 2855 752 Q 3116 1113 3116 1747 z " transform="scale(0.015625)"/> <path id="DejaVuSans-75" d="M 544 1381 L 544 3500 L 1119 3500 L 1119 1403 Q 1119 906 1312 657 Q 1506 409 1894 409 Q 2359 409 2629 706 Q 2900 1003 2900 1516 L 2900 3500 L 3475 3500 L 3475 0 L 2900 0 L 2900 538 Q 2691 219 2414 64 Q 2138 -91 1772 -91 Q 1169 -91 856 284 Q 544 659 544 1381 z M 1991 3584 L 1991 3584 z " transform="scale(0.015625)"/> </defs> <use href="#DejaVuSans-4a"/> <use href="#DejaVuSans-61" transform="translate(29.49 0)"/> <use href="#DejaVuSans-69" transform="translate(90.77 0)"/> <use href="#DejaVuSans-70" transform="translate(118.55 0)"/> <use href="#DejaVuSans-75" transform="translate(182.03 0)"/> <use href="#DejaVuSans-72" transform="translate(245.41 0)"/> </g> </g> </g> <g id="xtick_6"> <g id="text_6"> <g style="fill: #262626" transform="translate(432.17 252.63) scale(0.11 -0.11)"> <defs> <path id="DejaVuSans-4d" d="M 628 4666 L 1569 4666 L 2759 1491 L 3956 4666 L 4897 4666 L 4897 0 L 4281 0 L 4281 4097 L 3078 897 L 2444 897 L 1241 4097 L 1241 0 L 628 0 L 628 4666 z " transform="scale(0.015625)"/> </defs> <use href="#DejaVuSans-4d"/> <use href="#DejaVuSans-75" transform="translate(86.27 0)"/> <use href="#DejaVuSans-6d" transform="translate(149.65 0)"/> <use href="#DejaVuSans-62" transform="translate(247.07 0)"/> <use href="#DejaVuSans-61" transform="translate(310.54 0)"/> <use href="#DejaVuSans-69" transform="translate(371.82 0)"/> </g> </g> </g> <g id="xtick_7"> <g id="text_7"> <g style="fill: #262626" transform="translate(509.30 252.63) scale(0.11 -0.11)"> <defs> <path id="DejaVuSans-50" d="M 1259 4147 L 1259 2394 L 2053 2394 Q 2494 2394 2734 2622 Q 2975 2850 2975 3272 Q 2975 3691 2734 3919 Q 2494 4147 2053 4147 L 1259 4147 z M 628 4666 L 2053 4666 Q 2838 4666 3239 4311 Q 3641 3956 3641 3272 Q 3641 2581 3239 2228 Q 2838 1875 2053 1875 L 1259 1875 L 1259 0 L 628 0 L 628 4666 z " transform="scale(0.015625)"/> </defs> <use href="#DejaVuSans-50"/> <use href="#DejaVuSans-75" transform="translate(58.55 0)"/> <use href="#DejaVuSans-6e" transform="translate(121.93 0)"/> <use href="#DejaVuSans-65" transform="translate(185.31 0)"/> </g> </g> </g> <g id="text_8"> <g style="fill: #262626" transform="translate(306.91 266.52) scale(0.1 -0.1)"> <defs> <path id="DejaVuSans-43" d="M 4122 4306 L 4122 3641 Q 3803 3938 3442 4084 Q 3081 4231 2675 4231 Q 1875 4231 1450 3742 Q 1025 3253 1025 2328 Q 1025 1406 1450 917 Q 1875 428 2675 428 Q 3081 428 3442 575 Q 3803 722 4122 1019 L 4122 359 Q 3791 134 3420 21 Q 3050 -91 2638 -91 Q 1578 -91 968 557 Q 359 1206 359 2328 Q 359 3453 968 4101 Q 1578 4750 2638 4750 Q 3056 4750 3426 4639 Q 3797 4528 4122 4306 z " transform="scale(0.015625)"/> <path id="DejaVuSans-74" d="M 1172 4494 L 1172 3500 L 2356 3500 L 2356 3053 L 1172 3053 L 1172 1153 Q 1172 725 1289 603 Q 1406 481 1766 481 L 2356 481 L 2356 0 L 1766 0 Q 1100 0 847 248 Q 594 497 594 1153 L 594 3053 L 172 3053 L 172 3500 L 594 3500 L 594 4494 L 1172 4494 z " transform="scale(0.015625)"/> </defs> <use href="#DejaVuSans-43"/> <use href="#DejaVuSans-69" transform="translate(69.82 0)"/> <use href="#DejaVuSans-74" transform="translate(97.60 0)"/> <use href="#DejaVuSans-79" transform="translate(136.81 0)"/> </g> </g> </g> <g id="matplotlib.axis_2"> <g id="ytick_1"> <g id="line2d_1"> <path d="M 76.18 234.77 L 557.23 234.77 " clip-path="url(#p7ad8301192)" style="fill: none; stroke: #cccccc; stroke-linecap: round"/> </g> <g id="text_9"> <g style="fill: #262626" transform="translate(59.05 239.33) scale(0.12 -0.12)"> <defs> <path id="DejaVuSans-30" d="M 2034 4250 Q 1547 4250 1301 3770 Q 1056 3291 1056 2328 Q 1056 1369 1301 889 Q 1547 409 2034 409 Q 2525 409 2770 889 Q 3016 1369 3016 2328 Q 3016 3291 2770 3770 Q 2525 4250 2034 4250 z M 2034 4750 Q 2819 4750 3233 4129 Q 3647 3509 3647 2328 Q 3647 1150 3233 529 Q 2819 -91 2034 -91 Q 1250 -91 836 529 Q 422 1150 422 2328 Q 422 3509 836 4129 Q 1250 4750 2034 4750 z " transform="scale(0.015625)"/> </defs> <use href="#DejaVuSans-30"/> </g> </g> </g> <g id="ytick_2"> <g id="line2d_2"> <path d="M 76.18 195.97 L 557.23 195.97 " clip-path="url(#p7ad8301192)" style="fill: none; stroke: #cccccc; stroke-linecap: round"/> </g> <g id="text_10"> <g style="fill: #262626" transform="translate(20.87 200.53) scale(0.12 -0.12)"> <defs> <path id="DejaVuSans-31" d="M 794 531 L 1825 531 L 1825 4091 L 703 3866 L 703 4441 L 1819 4666 L 2450 4666 L 2450 531 L 3481 531 L 3481 0 L 794 0 L 794 531 z " transform="scale(0.015625)"/> </defs> <use href="#DejaVuSans-31"/> <use href="#DejaVuSans-30" transform="translate(63.62 0)"/> <use href="#DejaVuSans-30" transform="translate(127.24 0)"/> <use href="#DejaVuSans-30" transform="translate(190.86 0)"/> <use href="#DejaVuSans-30" transform="translate(254.49 0)"/> <use href="#DejaVuSans-30" transform="translate(318.11 0)"/> </g> </g> </g> <g id="ytick_3"> <g id="line2d_3"> <path d="M 76.18 157.17 L 557.23 157.17 " clip-path="url(#p7ad8301192)" style="fill: none; stroke: #cccccc; stroke-linecap: round"/> </g> <g id="text_11"> <g style="fill: #262626" transform="translate(20.87 161.73) scale(0.12 -0.12)"> <defs> <path id="DejaVuSans-32" d="M 1228 531 L 3431 531 L 3431 0 L 469 0 L 469 531 Q 828 903 1448 1529 Q 2069 2156 2228 2338 Q 2531 2678 2651 2914 Q 2772 3150 2772 3378 Q 2772 3750 2511 3984 Q 2250 4219 1831 4219 Q 1534 4219 1204 4116 Q 875 4013 500 3803 L 500 4441 Q 881 4594 1212 4672 Q 1544 4750 1819 4750 Q 2544 4750 2975 4387 Q 3406 4025 3406 3419 Q 3406 3131 3298 2873 Q 3191 2616 2906 2266 Q 2828 2175 2409 1742 Q 1991 1309 1228 531 z " transform="scale(0.015625)"/> </defs> <use href="#DejaVuSans-32"/> <use href="#DejaVuSans-30" transform="translate(63.62 0)"/> <use href="#DejaVuSans-30" transform="translate(127.24 0)"/> <use href="#DejaVuSans-30" transform="translate(190.86 0)"/> <use href="#DejaVuSans-30" transform="translate(254.49 0)"/> <use href="#DejaVuSans-30" transform="translate(318.11 0)"/> </g> </g> </g> <g id="ytick_4"> <g id="line2d_4"> <path d="M 76.18 118.37 L 557.23 118.37 " clip-path="url(#p7ad8301192)" style="fill: none; stroke: #cccccc; stroke-linecap: round"/> </g> <g id="text_12"> <g style="fill: #262626" transform="translate(20.87 122.93) scale(0.12 -0.12)"> <defs> <path id="DejaVuSans-33" d="M 2597 2516 Q 3050 2419 3304 2112 Q 3559 1806 3559 1356 Q 3559 666 3084 287 Q 2609 -91 1734 -91 Q 1441 -91 1130 -33 Q 819 25 488 141 L 488 750 Q 750 597 1062 519 Q 1375 441 1716 441 Q 2309 441 2620 675 Q 2931 909 2931 1356 Q 2931 1769 2642 2001 Q 2353 2234 1838 2234 L 1294 2234 L 1294 2753 L 1863 2753 Q 2328 2753 2575 2939 Q 2822 3125 2822 3475 Q 2822 3834 2567 4026 Q 2313 4219 1838 4219 Q 1578 4219 1281 4162 Q 984 4106 628 3988 L 628 4550 Q 988 4650 1302 4700 Q 1616 4750 1894 4750 Q 2613 4750 3031 4423 Q 3450 4097 3450 3541 Q 3450 3153 3228 2886 Q 3006 2619 2597 2516 z " transform="scale(0.015625)"/> </defs> <use href="#DejaVuSans-33"/> <use href="#DejaVuSans-30" transform="translate(63.62 0)"/> <use href="#DejaVuSans-30" transform="translate(127.24 0)"/> <use href="#DejaVuSans-30" transform="translate(190.86 0)"/> <use href="#DejaVuSans-30" transform="translate(254.49 0)"/> <use href="#DejaVuSans-30" transform="translate(318.11 0)"/> </g> </g> </g> <g id="ytick_5"> <g id="line2d_5"> <path d="M 76.18 79.57 L 557.23 79.57 " clip-path="url(#p7ad8301192)" style="fill: none; stroke: #cccccc; stroke-linecap: round"/> </g> <g id="text_13"> <g style="fill: #262626" transform="translate(20.87 84.13) scale(0.12 -0.12)"> <defs> <path id="DejaVuSans-34" d="M 2419 4116 L 825 1625 L 2419 1625 L 2419 4116 z M 2253 4666 L 3047 4666 L 3047 1625 L 3713 1625 L 3713 1100 L 3047 1100 L 3047 0 L 2419 0 L 2419 1100 L 313 1100 L 313 1709 L 2253 4666 z " transform="scale(0.015625)"/> </defs> <use href="#DejaVuSans-34"/> <use href="#DejaVuSans-30" transform="translate(63.62 0)"/> <use href="#DejaVuSans-30" transform="translate(127.24 0)"/> <use href="#DejaVuSans-30" transform="translate(190.86 0)"/> <use href="#DejaVuSans-30" transform="translate(254.49 0)"/> <use href="#DejaVuSans-30" transform="translate(318.11 0)"/> </g> </g> </g> <g id="ytick_6"> <g id="line2d_6"> <path d="M 76.18 40.77 L 557.23 40.77 " clip-path="url(#p7ad8301192)" style="fill: none; stroke: #cccccc; stroke-linecap: round"/> </g> <g id="text_14"> <g style="fill: #262626" transform="translate(20.87 45.33) scale(0.12 -0.12)"> <defs> <path id="DejaVuSans-35" d="M 691 4666 L 3169 4666 L 3169 4134 L 1269 4134 L 1269 2991 Q 1406 3038 1543 3061 Q 1681 3084 1819 3084 Q 2600 3084 3056 2656 Q 3513 2228 3513 1497 Q 3513 744 3044 326 Q 2575 -91 1722 -91 Q 1428 -91 1123 -41 Q 819 9 494 109 L 494 744 Q 775 591 1075 516 Q 1375 441 1709 441 Q 2250 441 2565 725 Q 2881 1009 2881 1497 Q 2881 1984 2565 2268 Q 2250 2553 1709 2553 Q 1456 2553 1204 2497 Q 953 2441 691 2322 L 691 4666 z " transform="scale(0.015625)"/> </defs> <use href="#DejaVuSans-35"/> <use href="#DejaVuSans-30" transform="translate(63.62 0)"/> <use href="#DejaVuSans-30" transform="translate(127.24 0)"/> <use href="#DejaVuSans-30" transform="translate(190.86 0)"/> <use href="#DejaVuSans-30" transform="translate(254.49 0)"/> <use href="#DejaVuSans-30" transform="translate(318.11 0)"/> </g> </g> </g> <g id="text_15"> <g style="fill: #262626" transform="translate(14.79 164.72) rotate(-90) scale(0.1 -0.1)"> <defs> <path id="DejaVuSans-54" d="M -19 4666 L 3928 4666 L 3928 4134 L 2272 4134 L 2272 0 L 1638 0 L 1638 4134 L -19 4134 L -19 4666 z " transform="scale(0.015625)"/> <path id="DejaVuSans-20" transform="scale(0.015625)"/> <path id="DejaVuSans-52" d="M 2841 2188 Q 3044 2119 3236 1894 Q 3428 1669 3622 1275 L 4263 0 L 3584 0 L 2988 1197 Q 2756 1666 2539 1819 Q 2322 1972 1947 1972 L 1259 1972 L 1259 0 L 628 0 L 628 4666 L 2053 4666 Q 2853 4666 3247 4331 Q 3641 3997 3641 3322 Q 3641 2881 3436 2590 Q 3231 2300 2841 2188 z M 1259 4147 L 1259 2491 L 2053 2491 Q 2509 2491 2742 2702 Q 2975 2913 2975 3322 Q 2975 3731 2742 3939 Q 2509 4147 2053 4147 L 1259 4147 z " transform="scale(0.015625)"/> <path id="DejaVuSans-76" d="M 191 3500 L 800 3500 L 1894 563 L 2988 3500 L 3597 3500 L 2284 0 L 1503 0 L 191 3500 z " transform="scale(0.015625)"/> </defs> <use href="#DejaVuSans-54"/> <use href="#DejaVuSans-6f" transform="translate(44.08 0)"/> <use href="#DejaVuSans-74" transform="translate(105.26 0)"/> <use href="#DejaVuSans-61" transform="translate(144.47 0)"/> <use href="#DejaVuSans-6c" transform="translate(205.75 0)"/> <use href="#DejaVuSans-20" transform="translate(233.53 0)"/> <use href="#DejaVuSans-52" transform="translate(265.32 0)"/> <use href="#DejaVuSans-65" transform="translate(330.30 0)"/> <use href="#DejaVuSans-76" transform="translate(391.83 0)"/> <use href="#DejaVuSans-65" transform="translate(451.00 0)"/> <use href="#DejaVuSans-6e" transform="translate(512.53 0)"/> <use href="#DejaVuSans-75" transform="translate(575.91 0)"/> <use href="#DejaVuSans-65" transform="translate(639.29 0)"/> </g> </g> </g> <g id="patch_3"> <path d="M 83.06 234.77 L 110.54 234.77 L 110.54 232.22 L 83.06 232.22 z " clip-path="url(#p7ad8301192)" style="fill: #edba8d; stroke: #ffffff; stroke-linejoin: miter"/> </g> <g id="patch_4"> <path d="M 151.78 234.77 L 179.27 234.77 L 179.27 232.46 L 151.78 232.46 z " clip-path="url(#p7ad8301192)" style="fill: #edba8d; stroke: #ffffff; stroke-linejoin: miter"/> </g> <g id="patch_5"> <path d="M 220.50 234.77 L 247.99 234.77 L 247.99 229.64 L 220.50 229.64 z " clip-path="url(#p7ad8301192)" style="fill: #edba8d; stroke: #ffffff; stroke-linejoin: miter"/> </g> <g id="patch_6"> <path d="M 289.22 234.77 L 316.71 234.77 L 316.71 231.07 L 289.22 231.07 z " clip-path="url(#p7ad8301192)" style="fill: #edba8d; stroke: #ffffff; stroke-linejoin: miter"/> </g> <g id="patch_7"> <path d="M 357.94 234.77 L 385.43 234.77 L 385.43 230.19 L 357.94 230.19 z " clip-path="url(#p7ad8301192)" style="fill: #edba8d; stroke: #ffffff; stroke-linejoin: miter"/> </g> <g id="patch_8"> <path d="M 426.66 234.77 L 454.15 234.77 L 454.15 231.94 L 426.66 231.94 z " clip-path="url(#p7ad8301192)" style="fill: #edba8d; stroke: #ffffff; stroke-linejoin: miter"/> </g> <g id="patch_9"> <path d="M 495.38 234.77 L 522.87 234.77 L 522.87 231.32 L 495.38 231.32 z " clip-path="url(#p7ad8301192)" style="fill: #edba8d; stroke: #ffffff; stroke-linejoin: miter"/> </g> <g id="patch_10"> <path d="M 110.54 234.77 L 138.03 234.77 L 138.03 50.39 L 110.54 50.39 z " clip-path="url(#p7ad8301192)" style="fill: #ce6528; stroke: #ffffff; stroke-linejoin: miter"/> </g> <g id="patch_11"> <path d="M 179.27 234.77 L 206.75 234.77 L 206.75 89.87 L 179.27 89.87 z " clip-path="url(#p7ad8301192)" style="fill: #ce6528; stroke: #ffffff; stroke-linejoin: miter"/> </g> <g id="patch_12"> <path d="M 247.99 234.77 L 275.48 234.77 L 275.48 86.10 L 247.99 86.10 z " clip-path="url(#p7ad8301192)" style="fill: #ce6528; stroke: #ffffff; stroke-linejoin: miter"/> </g> <g id="patch_13"> <path d="M 316.71 234.77 L 344.20 234.77 L 344.20 35.94 L 316.71 35.94 z " clip-path="url(#p7ad8301192)" style="fill: #ce6528; stroke: #ffffff; stroke-linejoin: miter"/> </g> <g id="patch_14"> <path d="M 385.43 234.77 L 412.92 234.77 L 412.92 34.60 L 385.43 34.60 z " clip-path="url(#p7ad8301192)" style="fill: #ce6528; stroke: #ffffff; stroke-linejoin: miter"/> </g> <g id="patch_15"> <path d="M 454.15 234.77 L 481.64 234.77 L 481.64 38.91 L 454.15 38.91 z " clip-path="url(#p7ad8301192)" style="fill: #ce6528; stroke: #ffffff; stroke-linejoin: miter"/> </g> <g id="patch_16"> <path d="M 522.87 234.77 L 550.36 234.77 L 550.36 82.57 L 522.87 82.57 z " clip-path="url(#p7ad8301192)" style="fill: #ce6528; stroke: #ffffff; stroke-linejoin: miter"/> </g> <g id="patch_17"> <path d="M 110.54 234.77 L 110.54 234.77 L 110.54 234.77 L 110.54 234.77 z " clip-path="url(#p7ad8301192)" style="fill: #edba8d; stroke: #ffffff; stroke-linejoin: miter"/> </g> <g id="patch_18"> <path d="M 110.54 234.77 L 110.54 234.77 L 110.54 234.77 L 110.54 234.77 z " clip-path="url(#p7ad8301192)" style="fill: #ce6528; stroke: #ffffff; stroke-linejoin: miter"/> </g> <g id="line2d_7"> <path clip-path="url(#p7ad8301192)" style="fill: none; stroke: #424242; stroke-width: 2.25; stroke-linecap: round"/> </g> <g id="line2d_8"> <path clip-path="url(#p7ad8301192)" style="fill: none; stroke: #424242; stroke-width: 2.25; stroke-linecap: round"/> </g> <g id="line2d_9"> <path clip-path="url(#p7ad8301192)" style="fill: none; stroke: #424242; stroke-width: 2.25; stroke-linecap: round"/> </g> <g id="line2d_10"> <path clip-path="url(#p7ad8301192)" style="fill: none; stroke: #424242; stroke-width: 2.25; stroke-linecap: round"/> </g> <g id="line2d_11"> <path clip-path="url(#p7ad8301192)" style="fill: none; stroke: #424242; stroke-width: 2.25; stroke-linecap: round"/> </g> <g id="line2d_12"> <path clip-path="url(#p7ad8301192)" style="fill: none; stroke: #424242; stroke-width: 2.25; stroke-linecap: round"/> </g> <g id="line2d_13"> <path clip-path="url(#p7ad8301192)" style="fill: none; stroke: #424242; stroke-width: 2.25; stroke-linecap: round"/> </g> <g id="line2d_14"> <path clip-path="url(#p7ad8301192)" style="fill: none; stroke: #424242; stroke-width: 2.25; stroke-linecap: round"/> </g> <g id="line2d_15"> <path clip-path="url(#p7ad8301192)" style="fill: none; stroke: #424242; stroke-width: 2.25; stroke-linecap: round"/> </g> <g id="line2d_16"> <path clip-path="url(#p7ad8301192)" style="fill: none; stroke: #424242; stroke-width: 2.25; stroke-linecap: round"/> </g> <g id="line2d_17"> <path clip-path="url(#p7ad8301192)" style="fill: none; stroke: #424242; stroke-width: 2.25; stroke-linecap: round"/> </g> <g id="line2d_18"> <path clip-path="url(#p7ad8301192)" style="fill: none; stroke: #424242; stroke-width: 2.25; stroke-linecap: round"/> </g> <g id="line2d_19"> <path clip-path="url(#p7ad8301192)" style="fill: none; stroke: #424242; stroke-width: 2.25; stroke-linecap: round"/> </g> <g id="line2d_20"> <path clip-path="url(#p7ad8301192)" style="fill: none; stroke: #424242; stroke-width: 2.25; stroke-linecap: round"/> </g> <g id="line2d_21"> <path d="M 76.18 145.52 L 557.23 145.52 " clip-path="url(#p7ad8301192)" style="fill: none; stroke-dasharray: 3.7,1.6; stroke-dashoffset: 0; stroke: #808080"/> </g> <g id="patch_19"> <path d="M 76.18 234.77 L 557.23 234.77 " style="fill: none; stroke: #cccccc; stroke-width: 1.25; stroke-linejoin: miter; stroke-linecap: square"/> </g> <g id="text_16"> <g style="fill: #696969" transform="translate(83.92 227.35) scale(0.09 -0.09)"> <defs> <path id="DejaVuSans-36" d="M 2113 2584 Q 1688 2584 1439 2293 Q 1191 2003 1191 1497 Q 1191 994 1439 701 Q 1688 409 2113 409 Q 2538 409 2786 701 Q 3034 994 3034 1497 Q 3034 2003 2786 2293 Q 2538 2584 2113 2584 z M 3366 4563 L 3366 3988 Q 3128 4100 2886 4159 Q 2644 4219 2406 4219 Q 1781 4219 1451 3797 Q 1122 3375 1075 2522 Q 1259 2794 1537 2939 Q 1816 3084 2150 3084 Q 2853 3084 3261 2657 Q 3669 2231 3669 1497 Q 3669 778 3244 343 Q 2819 -91 2113 -91 Q 1303 -91 875 529 Q 447 1150 447 2328 Q 447 3434 972 4092 Q 1497 4750 2381 4750 Q 2619 4750 2861 4703 Q 3103 4656 3366 4563 z " transform="scale(0.015625)"/> <path id="DejaVuSans-2c" d="M 750 794 L 1409 794 L 1409 256 L 897 -744 L 494 -744 L 750 256 L 750 794 z " transform="scale(0.015625)"/> <path id="DejaVuSans-37" d="M 525 4666 L 3525 4666 L 3525 4397 L 1831 0 L 1172 0 L 2766 4134 L 525 4134 L 525 4666 z " transform="scale(0.015625)"/> <path id="DejaVuSans-38" d="M 2034 2216 Q 1584 2216 1326 1975 Q 1069 1734 1069 1313 Q 1069 891 1326 650 Q 1584 409 2034 409 Q 2484 409 2743 651 Q 3003 894 3003 1313 Q 3003 1734 2745 1975 Q 2488 2216 2034 2216 z M 1403 2484 Q 997 2584 770 2862 Q 544 3141 544 3541 Q 544 4100 942 4425 Q 1341 4750 2034 4750 Q 2731 4750 3128 4425 Q 3525 4100 3525 3541 Q 3525 3141 3298 2862 Q 3072 2584 2669 2484 Q 3125 2378 3379 2068 Q 3634 1759 3634 1313 Q 3634 634 3220 271 Q 2806 -91 2034 -91 Q 1263 -91 848 271 Q 434 634 434 1313 Q 434 1759 690 2068 Q 947 2378 1403 2484 z M 1172 3481 Q 1172 3119 1398 2916 Q 1625 2713 2034 2713 Q 2441 2713 2670 2916 Q 2900 3119 2900 3481 Q 2900 3844 2670 4047 Q 2441 4250 2034 4250 Q 1625 4250 1398 4047 Q 1172 3844 1172 3481 z " transform="scale(0.015625)"/> </defs> <use href="#DejaVuSans-36"/> <use href="#DejaVuSans-2c" transform="translate(63.62 0)"/> <use href="#DejaVuSans-35" transform="translate(95.41 0)"/> <use href="#DejaVuSans-37" transform="translate(159.03 0)"/> <use href="#DejaVuSans-38" transform="translate(222.65 0)"/> </g> </g> <g id="text_17"> <g style="fill: #696969" transform="translate(152.64 227.59) scale(0.09 -0.09)"> <defs> <path id="DejaVuSans-39" d="M 703 97 L 703 672 Q 941 559 1184 500 Q 1428 441 1663 441 Q 2288 441 2617 861 Q 2947 1281 2994 2138 Q 2813 1869 2534 1725 Q 2256 1581 1919 1581 Q 1219 1581 811 2004 Q 403 2428 403 3163 Q 403 3881 828 4315 Q 1253 4750 1959 4750 Q 2769 4750 3195 4129 Q 3622 3509 3622 2328 Q 3622 1225 3098 567 Q 2575 -91 1691 -91 Q 1453 -91 1209 -44 Q 966 3 703 97 z M 1959 2075 Q 2384 2075 2632 2365 Q 2881 2656 2881 3163 Q 2881 3666 2632 3958 Q 2384 4250 1959 4250 Q 1534 4250 1286 3958 Q 1038 3666 1038 3163 Q 1038 2656 1286 2365 Q 1534 2075 1959 2075 z " transform="scale(0.015625)"/> </defs> <use href="#DejaVuSans-35"/> <use href="#DejaVuSans-2c" transform="translate(63.62 0)"/> <use href="#DejaVuSans-39" transform="translate(95.41 0)"/> <use href="#DejaVuSans-36" transform="translate(159.03 0)"/> <use href="#DejaVuSans-30" transform="translate(222.65 0)"/> </g> </g> <g id="text_18"> <g style="fill: #696969" transform="translate(218.50 224.77) scale(0.09 -0.09)"> <use href="#DejaVuSans-31"/> <use href="#DejaVuSans-33" transform="translate(63.62 0)"/> <use href="#DejaVuSans-2c" transform="translate(127.24 0)"/> <use href="#DejaVuSans-32" transform="translate(159.03 0)"/> <use href="#DejaVuSans-32" transform="translate(222.65 0)"/> <use href="#DejaVuSans-35" transform="translate(286.27 0)"/> </g> </g> <g id="text_19"> <g style="fill: #696969" transform="translate(290.08 226.20) scale(0.09 -0.09)"> <use href="#DejaVuSans-39"/> <use href="#DejaVuSans-2c" transform="translate(63.62 0)"/> <use href="#DejaVuSans-35" transform="translate(95.41 0)"/> <use href="#DejaVuSans-34" transform="translate(159.03 0)"/> <use href="#DejaVuSans-31" transform="translate(222.65 0)"/> </g> </g> <g id="text_20"> <g style="fill: #696969" transform="translate(355.94 225.32) scale(0.09 -0.09)"> <use href="#DejaVuSans-31"/> <use href="#DejaVuSans-31" transform="translate(63.62 0)"/> <use href="#DejaVuSans-2c" transform="translate(127.24 0)"/> <use href="#DejaVuSans-37" transform="translate(159.03 0)"/> <use href="#DejaVuSans-39" transform="translate(222.65 0)"/> <use href="#DejaVuSans-39" transform="translate(286.27 0)"/> </g> </g> <g id="text_21"> <g style="fill: #696969" transform="translate(427.52 227.07) scale(0.09 -0.09)"> <use href="#DejaVuSans-37"/> <use href="#DejaVuSans-2c" transform="translate(63.62 0)"/> <use href="#DejaVuSans-33" transform="translate(95.41 0)"/> <use href="#DejaVuSans-30" transform="translate(159.03 0)"/> <use href="#DejaVuSans-33" transform="translate(222.65 0)"/> </g> </g> <g id="text_22"> <g style="fill: #696969" transform="translate(496.25 226.45) scale(0.09 -0.09)"> <use href="#DejaVuSans-38"/> <use href="#DejaVuSans-2c" transform="translate(63.62 0)"/> <use href="#DejaVuSans-38" transform="translate(95.41 0)"/> <use href="#DejaVuSans-39" transform="translate(159.03 0)"/> <use href="#DejaVuSans-38" transform="translate(222.65 0)"/> </g> </g> <g id="text_23"> <g style="fill: #696969" transform="translate(105.68 45.51) scale(0.09 -0.09)"> <use href="#DejaVuSans-34"/> <use href="#DejaVuSans-37" transform="translate(63.62 0)"/> <use href="#DejaVuSans-35" transform="translate(127.24 0)"/> <use href="#DejaVuSans-2c" transform="translate(190.86 0)"/> <use href="#DejaVuSans-32" transform="translate(222.65 0)"/> <use href="#DejaVuSans-30" transform="translate(286.27 0)"/> <use href="#DejaVuSans-38" transform="translate(349.90 0)"/> </g> </g> <g id="text_24"> <g style="fill: #696969" transform="translate(174.40 85.00) scale(0.09 -0.09)"> <use href="#DejaVuSans-33"/> <use href="#DejaVuSans-37" transform="translate(63.62 0)"/> <use href="#DejaVuSans-33" transform="translate(127.24 0)"/> <use href="#DejaVuSans-2c" transform="translate(190.86 0)"/> <use href="#DejaVuSans-34" transform="translate(222.65 0)"/> <use href="#DejaVuSans-34" transform="translate(286.27 0)"/> <use href="#DejaVuSans-35" transform="translate(349.90 0)"/> </g> </g> <g id="text_25"> <g style="fill: #696969" transform="translate(243.12 81.23) scale(0.09 -0.09)"> <use href="#DejaVuSans-33"/> <use href="#DejaVuSans-38" transform="translate(63.62 0)"/> <use href="#DejaVuSans-33" transform="translate(127.24 0)"/> <use href="#DejaVuSans-2c" transform="translate(190.86 0)"/> <use href="#DejaVuSans-31" transform="translate(222.65 0)"/> <use href="#DejaVuSans-35" transform="translate(286.27 0)"/> <use href="#DejaVuSans-31" transform="translate(349.90 0)"/> </g> </g> <g id="text_26"> <g style="fill: #696969" transform="translate(311.84 31.07) scale(0.09 -0.09)"> <use href="#DejaVuSans-35"/> <use href="#DejaVuSans-31" transform="translate(63.62 0)"/> <use href="#DejaVuSans-32" transform="translate(127.24 0)"/> <use href="#DejaVuSans-2c" transform="translate(190.86 0)"/> <use href="#DejaVuSans-34" transform="translate(222.65 0)"/> <use href="#DejaVuSans-34" transform="translate(286.27 0)"/> <use href="#DejaVuSans-35" transform="translate(349.90 0)"/> </g> </g> <g id="text_27"> <g style="fill: #696969" transform="translate(380.56 29.73) scale(0.09 -0.09)"> <use href="#DejaVuSans-35"/> <use href="#DejaVuSans-31" transform="translate(63.62 0)"/> <use href="#DejaVuSans-35" transform="translate(127.24 0)"/> <use href="#DejaVuSans-2c" transform="translate(190.86 0)"/> <use href="#DejaVuSans-38" transform="translate(222.65 0)"/> <use href="#DejaVuSans-38" transform="translate(286.27 0)"/> <use href="#DejaVuSans-38" transform="translate(349.90 0)"/> </g> </g> <g id="text_28"> <g style="fill: #696969" transform="translate(449.29 34.04) scale(0.09 -0.09)"> <use href="#DejaVuSans-35"/> <use href="#DejaVuSans-30" transform="translate(63.62 0)"/> <use href="#DejaVuSans-34" transform="translate(127.24 0)"/> <use href="#DejaVuSans-2c" transform="translate(190.86 0)"/> <use href="#DejaVuSans-37" transform="translate(222.65 0)"/> <use href="#DejaVuSans-38" transform="translate(286.27 0)"/> <use href="#DejaVuSans-31" transform="translate(349.90 0)"/> </g> </g> <g id="text_29"> <g style="fill: #696969" transform="translate(518.01 77.70) scale(0.09 -0.09)"> <use href="#DejaVuSans-33"/> <use href="#DejaVuSans-39" transform="translate(63.62 0)"/> <use href="#DejaVuSans-32" transform="translate(127.24 0)"/> <use href="#DejaVuSans-2c" transform="translate(190.86 0)"/> <use href="#DejaVuSans-32" transform="translate(222.65 0)"/> <use href="#DejaVuSans-36" transform="translate(286.27 0)"/> <use href="#DejaVuSans-36" transform="translate(349.90 0)"/> </g> </g> <g id="text_30"> <g style="fill: #e65100" transform="translate(138.92 18.59) scale(0.15 -0.15)"> <defs> <path id="DejaVuSans-Bold-54" d="M 31 4666 L 4331 4666 L 4331 3756 L 2784 3756 L 2784 0 L 1581 0 L 1581 3756 L 31 3756 L 31 4666 z " transform="scale(0.015625)"/> <path id="DejaVuSans-Bold-6f" d="M 2203 2784 Q 1831 2784 1636 2517 Q 1441 2250 1441 1747 Q 1441 1244 1636 976 Q 1831 709 2203 709 Q 2569 709 2762 976 Q 2956 1244 2956 1747 Q 2956 2250 2762 2517 Q 2569 2784 2203 2784 z M 2203 3584 Q 3106 3584 3614 3096 Q 4122 2609 4122 1747 Q 4122 884 3614 396 Q 3106 -91 2203 -91 Q 1297 -91 786 396 Q 275 884 275 1747 Q 275 2609 786 3096 Q 1297 3584 2203 3584 z " transform="scale(0.015625)"/> <path id="DejaVuSans-Bold-74" d="M 1759 4494 L 1759 3500 L 2913 3500 L 2913 2700 L 1759 2700 L 1759 1216 Q 1759 972 1856 886 Q 1953 800 2241 800 L 2816 800 L 2816 0 L 1856 0 Q 1194 0 917 276 Q 641 553 641 1216 L 641 2700 L 84 2700 L 84 3500 L 641 3500 L 641 4494 L 1759 4494 z " transform="scale(0.015625)"/> <path id="DejaVuSans-Bold-61" d="M 2106 1575 Q 1756 1575 1579 1456 Q 1403 1338 1403 1106 Q 1403 894 1545 773 Q 1688 653 1941 653 Q 2256 653 2472 879 Q 2688 1106 2688 1447 L 2688 1575 L 2106 1575 z M 3816 1997 L 3816 0 L 2688 0 L 2688 519 Q 2463 200 2181 54 Q 1900 -91 1497 -91 Q 953 -91 614 226 Q 275 544 275 1050 Q 275 1666 698 1953 Q 1122 2241 2028 2241 L 2688 2241 L 2688 2328 Q 2688 2594 2478 2717 Q 2269 2841 1825 2841 Q 1466 2841 1156 2769 Q 847 2697 581 2553 L 581 3406 Q 941 3494 1303 3539 Q 1666 3584 2028 3584 Q 2975 3584 3395 3211 Q 3816 2838 3816 1997 z " transform="scale(0.015625)"/> <path id="DejaVuSans-Bold-6c" d="M 538 4863 L 1656 4863 L 1656 0 L 538 0 L 538 4863 z " transform="scale(0.015625)"/> <path id="DejaVuSans-Bold-20" transform="scale(0.015625)"/> <path id="DejaVuSans-Bold-52" d="M 2297 2597 Q 2675 2597 2839 2737 Q 3003 2878 3003 3200 Q 3003 3519 2839 3656 Q 2675 3794 2297 3794 L 1791 3794 L 1791 2597 L 2297 2597 z M 1791 1766 L 1791 0 L 588 0 L 588 4666 L 2425 4666 Q 3347 4666 3776 4356 Q 4206 4047 4206 3378 Q 4206 2916 3982 2619 Q 3759 2322 3309 2181 Q 3556 2125 3751 1926 Q 3947 1728 4147 1325 L 4800 0 L 3519 0 L 2950 1159 Q 2778 1509 2601 1637 Q 2425 1766 2131 1766 L 1791 1766 z " transform="scale(0.015625)"/> <path id="DejaVuSans-Bold-65" d="M 4031 1759 L 4031 1441 L 1416 1441 Q 1456 1047 1700 850 Q 1944 653 2381 653 Q 2734 653 3104 758 Q 3475 863 3866 1075 L 3866 213 Q 3469 63 3072 -14 Q 2675 -91 2278 -91 Q 1328 -91 801 392 Q 275 875 275 1747 Q 275 2603 792 3093 Q 1309 3584 2216 3584 Q 3041 3584 3536 3087 Q 4031 2591 4031 1759 z M 2881 2131 Q 2881 2450 2695 2645 Q 2509 2841 2209 2841 Q 1884 2841 1681 2658 Q 1478 2475 1428 2131 L 2881 2131 z " transform="scale(0.015625)"/> <path id="DejaVuSans-Bold-76" d="M 97 3500 L 1216 3500 L 2088 1081 L 2956 3500 L 4078 3500 L 2700 0 L 1472 0 L 97 3500 z " transform="scale(0.015625)"/> <path id="DejaVuSans-Bold-6e" d="M 4056 2131 L 4056 0 L 2931 0 L 2931 347 L 2931 1631 Q 2931 2084 2911 2256 Q 2891 2428 2841 2509 Q 2775 2619 2662 2680 Q 2550 2741 2406 2741 Q 2056 2741 1856 2470 Q 1656 2200 1656 1722 L 1656 0 L 538 0 L 538 3500 L 1656 3500 L 1656 2988 Q 1909 3294 2193 3439 Q 2478 3584 2822 3584 Q 3428 3584 3742 3212 Q 4056 2841 4056 2131 z " transform="scale(0.015625)"/> <path id="DejaVuSans-Bold-75" d="M 500 1363 L 500 3500 L 1625 3500 L 1625 3150 Q 1625 2866 1622 2436 Q 1619 2006 1619 1863 Q 1619 1441 1641 1255 Q 1663 1069 1716 984 Q 1784 875 1895 815 Q 2006 756 2150 756 Q 2500 756 2700 1025 Q 2900 1294 2900 1772 L 2900 3500 L 4019 3500 L 4019 0 L 2900 0 L 2900 506 Q 2647 200 2364 54 Q 2081 -91 1741 -91 Q 1134 -91 817 281 Q 500 653 500 1363 z " transform="scale(0.015625)"/> <path id="DejaVuSans-Bold-62" d="M 2400 722 Q 2759 722 2948 984 Q 3138 1247 3138 1747 Q 3138 2247 2948 2509 Q 2759 2772 2400 2772 Q 2041 2772 1848 2508 Q 1656 2244 1656 1747 Q 1656 1250 1848 986 Q 2041 722 2400 722 z M 1656 2988 Q 1888 3294 2169 3439 Q 2450 3584 2816 3584 Q 3463 3584 3878 3070 Q 4294 2556 4294 1747 Q 4294 938 3878 423 Q 3463 -91 2816 -91 Q 2450 -91 2169 54 Q 1888 200 1656 506 L 1656 0 L 538 0 L 538 4863 L 1656 4863 L 1656 2988 z " transform="scale(0.015625)"/> <path id="DejaVuSans-Bold-79" d="M 78 3500 L 1197 3500 L 2138 1125 L 2938 3500 L 4056 3500 L 2584 -331 Q 2363 -916 2067 -1148 Q 1772 -1381 1288 -1381 L 641 -1381 L 641 -647 L 991 -647 Q 1275 -647 1404 -556 Q 1534 -466 1606 -231 L 1638 -134 L 78 3500 z " transform="scale(0.015625)"/> <path id="DejaVuSans-Bold-43" d="M 4288 256 Q 3956 84 3597 -3 Q 3238 -91 2847 -91 Q 1681 -91 1000 561 Q 319 1213 319 2328 Q 319 3447 1000 4098 Q 1681 4750 2847 4750 Q 3238 4750 3597 4662 Q 3956 4575 4288 4403 L 4288 3438 Q 3953 3666 3628 3772 Q 3303 3878 2944 3878 Q 2300 3878 1931 3465 Q 1563 3053 1563 2328 Q 1563 1606 1931 1193 Q 2300 781 2944 781 Q 3303 781 3628 887 Q 3953 994 4288 1222 L 4288 256 z " transform="scale(0.015625)"/> <path id="DejaVuSans-Bold-69" d="M 538 3500 L 1656 3500 L 1656 0 L 538 0 L 538 3500 z M 538 4863 L 1656 4863 L 1656 3950 L 538 3950 L 538 4863 z " transform="scale(0.015625)"/> <path id="DejaVuSans-Bold-64" d="M 2919 2988 L 2919 4863 L 4044 4863 L 4044 0 L 2919 0 L 2919 506 Q 2688 197 2409 53 Q 2131 -91 1766 -91 Q 1119 -91 703 423 Q 288 938 288 1747 Q 288 2556 703 3070 Q 1119 3584 1766 3584 Q 2128 3584 2408 3439 Q 2688 3294 2919 2988 z M 2181 722 Q 2541 722 2730 984 Q 2919 1247 2919 1747 Q 2919 2247 2730 2509 Q 2541 2772 2181 2772 Q 1825 2772 1636 2509 Q 1447 2247 1447 1747 Q 1447 1247 1636 984 Q 1825 722 2181 722 z " transform="scale(0.015625)"/> <path id="DejaVuSans-Bold-44" d="M 1791 3756 L 1791 909 L 2222 909 Q 2959 909 3348 1275 Q 3738 1641 3738 2338 Q 3738 3031 3350 3393 Q 2963 3756 2222 3756 L 1791 3756 z M 588 4666 L 1856 4666 Q 2919 4666 3439 4514 Q 3959 4363 4331 4000 Q 4659 3684 4818 3271 Q 4978 2859 4978 2338 Q 4978 1809 4818 1395 Q 4659 981 4331 666 Q 3956 303 3431 151 Q 2906 0 1856 0 L 588 0 L 588 4666 z " transform="scale(0.015625)"/> <path id="DejaVuSans-Bold-72" d="M 3138 2547 Q 2991 2616 2845 2648 Q 2700 2681 2553 2681 Q 2122 2681 1889 2404 Q 1656 2128 1656 1613 L 1656 0 L 538 0 L 538 3500 L 1656 3500 L 1656 2925 Q 1872 3269 2151 3426 Q 2431 3584 2822 3584 Q 2878 3584 2943 3579 Q 3009 3575 3134 3559 L 3138 2547 z " transform="scale(0.015625)"/> <path id="DejaVuSans-Bold-53" d="M 3834 4519 L 3834 3531 Q 3450 3703 3084 3790 Q 2719 3878 2394 3878 Q 1963 3878 1756 3759 Q 1550 3641 1550 3391 Q 1550 3203 1689 3098 Q 1828 2994 2194 2919 L 2706 2816 Q 3484 2659 3812 2340 Q 4141 2022 4141 1434 Q 4141 663 3683 286 Q 3225 -91 2284 -91 Q 1841 -91 1394 -6 Q 947 78 500 244 L 500 1259 Q 947 1022 1364 901 Q 1781 781 2169 781 Q 2563 781 2772 912 Q 2981 1044 2981 1288 Q 2981 1506 2839 1625 Q 2697 1744 2272 1838 L 1806 1941 Q 1106 2091 782 2419 Q 459 2747 459 3303 Q 459 4000 909 4375 Q 1359 4750 2203 4750 Q 2588 4750 2994 4692 Q 3400 4634 3834 4519 z " transform="scale(0.015625)"/> <path id="DejaVuSans-Bold-73" d="M 3272 3391 L 3272 2541 Q 2913 2691 2578 2766 Q 2244 2841 1947 2841 Q 1628 2841 1473 2761 Q 1319 2681 1319 2516 Q 1319 2381 1436 2309 Q 1553 2238 1856 2203 L 2053 2175 Q 2913 2066 3209 1816 Q 3506 1566 3506 1031 Q 3506 472 3093 190 Q 2681 -91 1863 -91 Q 1516 -91 1145 -36 Q 775 19 384 128 L 384 978 Q 719 816 1070 734 Q 1422 653 1784 653 Q 2113 653 2278 743 Q 2444 834 2444 1013 Q 2444 1163 2330 1236 Q 2216 1309 1875 1350 L 1678 1375 Q 931 1469 631 1722 Q 331 1975 331 2491 Q 331 3047 712 3315 Q 1094 3584 1881 3584 Q 2191 3584 2531 3537 Q 2872 3491 3272 3391 z " transform="scale(0.015625)"/> </defs> <use href="#DejaVuSans-Bold-54"/> <use href="#DejaVuSans-Bold-6f" transform="translate(54.96 0)"/> <use href="#DejaVuSans-Bold-74" transform="translate(123.66 0)"/> <use href="#DejaVuSans-Bold-61" transform="translate(171.46 0)"/> <use href="#DejaVuSans-Bold-6c" transform="translate(238.94 0)"/> <use href="#DejaVuSans-Bold-20" transform="translate(273.22 0)"/> <use href="#DejaVuSans-Bold-52" transform="translate(308.03 0)"/> <use href="#DejaVuSans-Bold-65" transform="translate(385.04 0)"/> <use href="#DejaVuSans-Bold-76" transform="translate(452.86 0)"/> <use href="#DejaVuSans-Bold-65" transform="translate(518.04 0)"/> <use href="#DejaVuSans-Bold-6e" transform="translate(585.87 0)"/> <use href="#DejaVuSans-Bold-75" transform="translate(657.06 0)"/> <use href="#DejaVuSans-Bold-65" transform="translate(728.25 0)"/> <use href="#DejaVuSans-Bold-20" transform="translate(796.07 0)"/> <use href="#DejaVuSans-Bold-62" transform="translate(830.89 0)"/> <use href="#DejaVuSans-Bold-79" transform="translate(902.47 0)"/> <use href="#DejaVuSans-Bold-20" transform="translate(967.65 0)"/> <use href="#DejaVuSans-Bold-43" transform="translate(1002.47 0)"/> <use href="#DejaVuSans-Bold-69" transform="translate(1075.86 0)"/> <use href="#DejaVuSans-Bold-74" transform="translate(1110.13 0)"/> <use href="#DejaVuSans-Bold-79" transform="translate(1157.94 0)"/> <use href="#DejaVuSans-Bold-20" transform="translate(1223.12 0)"/> <use href="#DejaVuSans-Bold-61" transform="translate(1257.94 0)"/> <use href="#DejaVuSans-Bold-6e" transform="translate(1325.42 0)"/> <use href="#DejaVuSans-Bold-64" transform="translate(1396.61 0)"/> <use href="#DejaVuSans-Bold-20" transform="translate(1468.19 0)"/> <use href="#DejaVuSans-Bold-44" transform="translate(1503.00 0)"/> <use href="#DejaVuSans-Bold-65" transform="translate(1586.01 0)"/> <use href="#DejaVuSans-Bold-6c" transform="translate(1653.83 0)"/> <use href="#DejaVuSans-Bold-69" transform="translate(1688.11 0)"/> <use href="#DejaVuSans-Bold-76" transform="translate(1722.39 0)"/> <use href="#DejaVuSans-Bold-65" transform="translate(1787.58 0)"/> <use href="#DejaVuSans-Bold-72" transform="translate(1855.40 0)"/> <use href="#DejaVuSans-Bold-79" transform="translate(1904.71 0)"/> <use href="#DejaVuSans-Bold-20" transform="translate(1969.90 0)"/> <use href="#DejaVuSans-Bold-53" transform="translate(2004.71 0)"/> <use href="#DejaVuSans-Bold-74" transform="translate(2076.74 0)"/> <use href="#DejaVuSans-Bold-61" transform="translate(2124.54 0)"/> <use href="#DejaVuSans-Bold-74" transform="translate(2192.02 0)"/> <use href="#DejaVuSans-Bold-75" transform="translate(2239.82 0)"/> <use href="#DejaVuSans-Bold-73" transform="translate(2311.01 0)"/> </g> </g> <g id="legend_1"> <g id="patch_20"> <path d="M 477.98 60.85 L 553.73 60.85 Q 554.73 60.85 554.73 59.85 L 554.73 28.09 Q 554.73 27.09 553.73 27.09 L 477.98 27.09 Q 476.98 27.09 476.98 28.09 L 476.98 59.85 Q 476.98 60.85 477.98 60.85 z " style="fill: #ffffff; opacity: 0.8; stroke: #cccccc; stroke-linejoin: miter"/> </g> <g id="text_31"> <g style="fill: #262626" transform="translate(485.23 35.17) scale(0.08 -0.08)"> <defs> <path id="DejaVuSans-53" d="M 3425 4513 L 3425 3897 Q 3066 4069 2747 4153 Q 2428 4238 2131 4238 Q 1616 4238 1336 4038 Q 1056 3838 1056 3469 Q 1056 3159 1242 3001 Q 1428 2844 1947 2747 L 2328 2669 Q 3034 2534 3370 2195 Q 3706 1856 3706 1288 Q 3706 609 3251 259 Q 2797 -91 1919 -91 Q 1588 -91 1214 -16 Q 841 59 441 206 L 441 856 Q 825 641 1194 531 Q 1563 422 1919 422 Q 2459 422 2753 634 Q 3047 847 3047 1241 Q 3047 1584 2836 1778 Q 2625 1972 2144 2069 L 1759 2144 Q 1053 2284 737 2584 Q 422 2884 422 3419 Q 422 4038 858 4394 Q 1294 4750 2059 4750 Q 2388 4750 2728 4690 Q 3069 4631 3425 4513 z " transform="scale(0.015625)"/> <path id="DejaVuSans-73" d="M 2834 3397 L 2834 2853 Q 2591 2978 2328 3040 Q 2066 3103 1784 3103 Q 1356 3103 1142 2972 Q 928 2841 928 2578 Q 928 2378 1081 2264 Q 1234 2150 1697 2047 L 1894 2003 Q 2506 1872 2764 1633 Q 3022 1394 3022 966 Q 3022 478 2636 193 Q 2250 -91 1575 -91 Q 1294 -91 989 -36 Q 684 19 347 128 L 347 722 Q 666 556 975 473 Q 1284 391 1588 391 Q 1994 391 2212 530 Q 2431 669 2431 922 Q 2431 1156 2273 1281 Q 2116 1406 1581 1522 L 1381 1569 Q 847 1681 609 1914 Q 372 2147 372 2553 Q 372 3047 722 3315 Q 1072 3584 1716 3584 Q 2034 3584 2315 3537 Q 2597 3491 2834 3397 z " transform="scale(0.015625)"/> </defs> <use href="#DejaVuSans-44"/> <use href="#DejaVuSans-65" transform="translate(77.00 0)"/> <use href="#DejaVuSans-6c" transform="translate(138.52 0)"/> <use href="#DejaVuSans-69" transform="translate(166.30 0)"/> <use href="#DejaVuSans-76" transform="translate(194.09 0)"/> <use href="#DejaVuSans-65" transform="translate(253.27 0)"/> <use href="#DejaVuSans-72" transform="translate(314.79 0)"/> <use href="#DejaVuSans-79" transform="translate(355.90 0)"/> <use href="#DejaVuSans-20" transform="translate(415.08 0)"/> <use href="#DejaVuSans-53" transform="translate(446.87 0)"/> <use href="#DejaVuSans-74" transform="translate(510.35 0)"/> <use href="#DejaVuSans-61" transform="translate(549.56 0)"/> <use href="#DejaVuSans-74" transform="translate(610.83 0)"/> <use href="#DejaVuSans-75" transform="translate(650.04 0)"/> <use href="#DejaVuSans-73" transform="translate(713.42 0)"/> </g> </g> <g id="patch_21"> <path d="M 478.98 43.13 L 488.98 43.13 L 488.98 39.63 L 478.98 39.63 z " style="fill: #edba8d; stroke: #ffffff; stroke-linejoin: miter"/> </g> <g id="text_32"> <g style="fill: #262626" transform="translate(492.98 43.13) scale(0.05 -0.05)"> <defs> <path id="DejaVuSans-63" d="M 3122 3366 L 3122 2828 Q 2878 2963 2633 3030 Q 2388 3097 2138 3097 Q 1578 3097 1268 2742 Q 959 2388 959 1747 Q 959 1106 1268 751 Q 1578 397 2138 397 Q 2388 397 2633 464 Q 2878 531 3122 666 L 3122 134 Q 2881 22 2623 -34 Q 2366 -91 2075 -91 Q 1284 -91 818 406 Q 353 903 353 1747 Q 353 2603 823 3093 Q 1294 3584 2113 3584 Q 2378 3584 2631 3529 Q 2884 3475 3122 3366 z " transform="scale(0.015625)"/> </defs> <use href="#DejaVuSans-43"/> <use href="#DejaVuSans-61" transform="translate(69.82 0)"/> <use href="#DejaVuSans-6e" transform="translate(131.10 0)"/> <use href="#DejaVuSans-63" transform="translate(194.48 0)"/> <use href="#DejaVuSans-65" transform="translate(249.46 0)"/> <use href="#DejaVuSans-6c" transform="translate(310.98 0)"/> <use href="#DejaVuSans-6c" transform="translate(338.76 0)"/> <use href="#DejaVuSans-65" transform="translate(366.55 0)"/> <use href="#DejaVuSans-64" transform="translate(428.07 0)"/> </g> </g> <g id="patch_22"> <path d="M 478.98 50.47 L 488.98 50.47 L 488.98 46.97 L 478.98 46.97 z " style="fill: #ce6528; stroke: #ffffff; stroke-linejoin: miter"/> </g> <g id="text_33"> <g style="fill: #262626" transform="translate(492.98 50.47) scale(0.05 -0.05)"> <use href="#DejaVuSans-44"/> <use href="#DejaVuSans-65" transform="translate(77.00 0)"/> <use href="#DejaVuSans-6c" transform="translate(138.52 0)"/> <use href="#DejaVuSans-69" transform="translate(166.30 0)"/> <use href="#DejaVuSans-76" transform="translate(194.09 0)"/> <use href="#DejaVuSans-65" transform="translate(253.27 0)"/> <use href="#DejaVuSans-72" transform="translate(314.79 0)"/> <use href="#DejaVuSans-65" transform="translate(353.65 0)"/> <use href="#DejaVuSans-64" transform="translate(415.18 0)"/> </g> </g> <g id="line2d_22"> <path d="M 478.98 56.06 L 483.98 56.06 L 488.98 56.06 " style="fill: none; stroke-dasharray: 3.7,1.6; stroke-dashoffset: 0; stroke: #808080"/> </g> <g id="text_34"> <g style="fill: #262626" transform="translate(492.98 57.81) scale(0.05 -0.05)"> <defs> <path id="DejaVuSans-3a" d="M 750 794 L 1409 794 L 1409 0 L 750 0 L 750 794 z M 750 3309 L 1409 3309 L 1409 2516 L 750 2516 L 750 3309 z " transform="scale(0.015625)"/> <path id="DejaVuSans-24" d="M 2163 -941 L 1850 -941 L 1847 0 Q 1519 6 1191 76 Q 863 147 531 288 L 531 850 Q 850 650 1176 548 Q 1503 447 1850 444 L 1850 1869 Q 1159 1981 845 2250 Q 531 2519 531 2988 Q 531 3497 872 3790 Q 1213 4084 1850 4128 L 1850 4863 L 2163 4863 L 2163 4138 Q 2453 4125 2725 4076 Q 2997 4028 3256 3944 L 3256 3397 Q 2997 3528 2723 3600 Q 2450 3672 2163 3684 L 2163 2350 Q 2872 2241 3206 1959 Q 3541 1678 3541 1191 Q 3541 663 3186 358 Q 2831 53 2163 6 L 2163 -941 z M 1850 2406 L 1850 3688 Q 1488 3647 1297 3481 Q 1106 3316 1106 3041 Q 1106 2772 1282 2622 Q 1459 2472 1850 2406 z M 2163 1806 L 2163 453 Q 2559 506 2761 678 Q 2963 850 2963 1131 Q 2963 1406 2770 1568 Q 2578 1731 2163 1806 z " transform="scale(0.015625)"/> </defs> <use href="#DejaVuSans-41"/> <use href="#DejaVuSans-76" transform="translate(62.53 0)"/> <use href="#DejaVuSans-67" transform="translate(121.71 0)"/> <use href="#DejaVuSans-20" transform="translate(185.18 0)"/> <use href="#DejaVuSans-52" transform="translate(216.97 0)"/> <use href="#DejaVuSans-65" transform="translate(281.95 0)"/> <use href="#DejaVuSans-76" transform="translate(343.48 0)"/> <use href="#DejaVuSans-65" transform="translate(402.66 0)"/> <use href="#DejaVuSans-6e" transform="translate(464.18 0)"/> <use href="#DejaVuSans-75" transform="translate(527.56 0)"/> <use href="#DejaVuSans-65" transform="translate(590.94 0)"/> <use href="#DejaVuSans-3a" transform="translate(652.46 0)"/> <use href="#DejaVuSans-20" transform="translate(686.15 0)"/> <use href="#DejaVuSans-24" transform="translate(717.94 0)"/> <use href="#DejaVuSans-32" transform="translate(781.56 0)"/> <use href="#DejaVuSans-33" transform="translate(845.19 0)"/> <use href="#DejaVuSans-30" transform="translate(908.81 0)"/> <use href="#DejaVuSans-2c" transform="translate(972.43 0)"/> <use href="#DejaVuSans-30" transform="translate(1004.22 0)"/> <use href="#DejaVuSans-33" transform="translate(1067.84 0)"/> <use href="#DejaVuSans-35" transform="translate(1131.47 0)"/> </g> </g> </g> </g> </g> <defs> <clipPath id="p7ad8301192"> <rect x="76.18" y="24.59" width="481.05" height="210.18"/> </clipPath> </defs> </svg></div>
</body></html>
